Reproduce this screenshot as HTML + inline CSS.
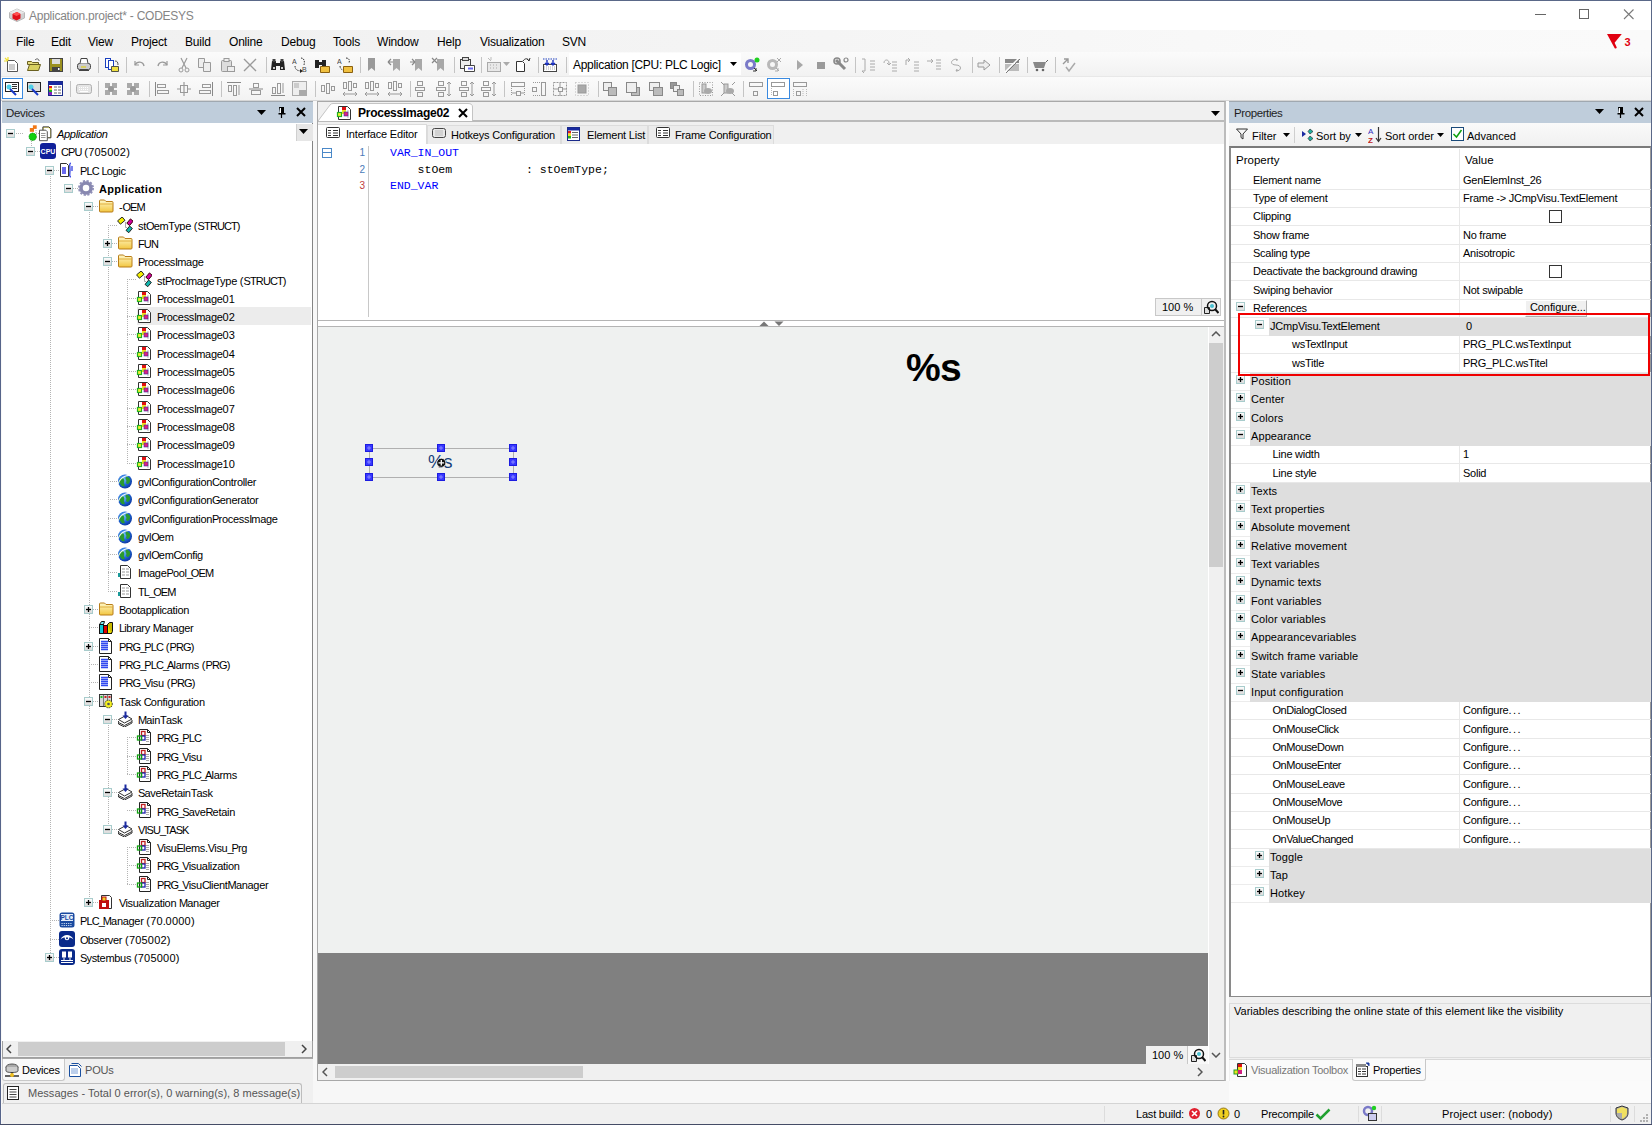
<!DOCTYPE html>
<html><head><meta charset="utf-8"><style>
*{margin:0;padding:0}
html,body{width:1652px;height:1125px;overflow:hidden;background:#f0f0f0}
body{position:relative;font-family:"Liberation Sans",sans-serif}
div,svg{position:absolute}
.t{white-space:nowrap;font-family:"Liberation Sans",sans-serif}
</style></head><body>
<div style="left:0px;top:0px;width:1652px;height:1125px;background:#f0f0f0"></div>
<div style="left:0px;top:0px;width:1652px;height:30px;background:#fff"></div>
<svg style="left:8px;top:7px" width="18" height="16" viewBox="0 0 18 16"><path d="M1.5 5.5 L9 2 L16.5 5.5 L16.5 11 L9 14.5 L1.5 11Z" fill="#d0d0d0" stroke="#b8b8b8"/><path d="M1.5 5.5 L9 2 L16.5 5.5 L9 9Z" fill="#e8e8e8"/><path d="M4.5 7 L9 5 L12.5 7 L12.5 11.5 L8.5 13.5 L4.5 11.5Z" fill="#e0101a"/><path d="M4.5 7 L9 5 L12.5 7 L8.5 9Z" fill="#ff5050"/></svg>
<div class="t" style="left:29px;top:6.5px;line-height:18px;font-size:12px;color:#858585;letter-spacing:-0.25px">Application.project* - CODESYS</div>
<div style="left:1535px;top:14px;width:11px;height:1px;background:#666"></div>
<div style="left:1579px;top:9px;width:10px;height:10px;border:1px solid #666;box-sizing:border-box"></div>
<svg style="left:1623px;top:9px" width="12" height="12" viewBox="0 0 12 12"><path d="M1 0.5 L10.5 10 M10.5 0.5 L1 10" stroke="#7a7a7a" stroke-width="1.1"/></svg>
<div style="left:1px;top:30px;width:1650px;height:22px;background:linear-gradient(90deg,#f0f0f0 0%,#f2f2f2 25%,#f5f5f5 50%,#f9f9f9 80%,#fafafa 100%)"></div>
<div class="t" style="left:16px;top:33.0px;line-height:18px;font-size:12px;color:#000;letter-spacing:-0.2px">File</div>
<div class="t" style="left:51px;top:33.0px;line-height:18px;font-size:12px;color:#000;letter-spacing:-0.2px">Edit</div>
<div class="t" style="left:88px;top:33.0px;line-height:18px;font-size:12px;color:#000;letter-spacing:-0.2px">View</div>
<div class="t" style="left:131px;top:33.0px;line-height:18px;font-size:12px;color:#000;letter-spacing:-0.2px">Project</div>
<div class="t" style="left:185px;top:33.0px;line-height:18px;font-size:12px;color:#000;letter-spacing:-0.2px">Build</div>
<div class="t" style="left:229px;top:33.0px;line-height:18px;font-size:12px;color:#000;letter-spacing:-0.2px">Online</div>
<div class="t" style="left:281px;top:33.0px;line-height:18px;font-size:12px;color:#000;letter-spacing:-0.2px">Debug</div>
<div class="t" style="left:333px;top:33.0px;line-height:18px;font-size:12px;color:#000;letter-spacing:-0.2px">Tools</div>
<div class="t" style="left:377px;top:33.0px;line-height:18px;font-size:12px;color:#000;letter-spacing:-0.2px">Window</div>
<div class="t" style="left:437px;top:33.0px;line-height:18px;font-size:12px;color:#000;letter-spacing:-0.2px">Help</div>
<div class="t" style="left:480px;top:33.0px;line-height:18px;font-size:12px;color:#000;letter-spacing:-0.2px">Visualization</div>
<div class="t" style="left:562px;top:33.0px;line-height:18px;font-size:12px;color:#000;letter-spacing:-0.2px">SVN</div>
<div style="left:1px;top:52px;width:1650px;height:49px;background:linear-gradient(#fbfbfb,#f2f2f2 48%,#fbfbfb 50%,#f2f2f2)"></div>
<div style="left:1px;top:100px;width:1650px;height:1px;background:#d6d6d6"></div>
<svg style="left:4px;top:57px" width="16" height="16" viewBox="0 0 16 16"><path d="M3.5 3.5h7l3 3v8h-10z" fill="#fff" stroke="#555"/><rect x="5" y="7" width="6" height="6" fill="#ccc"/><path d="M1 1l3 3M4 0v3M0 4h3" stroke="#f0e030" stroke-width="1.2"/></svg>
<svg style="left:26px;top:57px" width="16" height="16" viewBox="0 0 16 16"><path d="M1.5 4.5h4l1 1h6v2h-11z" fill="#e6dc80" stroke="#6a6020"/><path d="M1.5 13.5l2-6h11l-2 6z" fill="#d8d060" stroke="#6a6020"/><path d="M9 3c2-2 4-1 4 1" stroke="#555" fill="none"/></svg>
<svg style="left:48px;top:57px" width="16" height="16" viewBox="0 0 16 16"><rect x="1.5" y="1.5" width="13" height="13" fill="#9a9020" stroke="#444"/><rect x="4" y="2" width="8" height="5" fill="#ddd"/><rect x="4" y="10" width="8" height="4" fill="#444"/><rect x="10" y="11" width="1.5" height="2" fill="#fff"/></svg>
<svg style="left:76px;top:57px" width="16" height="16" viewBox="0 0 16 16"><rect x="1.5" y="6.5" width="13" height="6" rx="2" fill="#ccc" stroke="#444"/><path d="M4 6.5l1-5h6l1 5" fill="#fff" stroke="#444"/><path d="M5 10h5" stroke="#e0d020" stroke-width="1.2"/><path d="M3 13.5h10" stroke="#444"/></svg>
<svg style="left:104px;top:57px" width="16" height="16" viewBox="0 0 16 16"><rect x="1.5" y="1.5" width="5" height="9" fill="#fff" stroke="#1a40c0"/><rect x="4.5" y="3.5" width="5" height="9" fill="#fff" stroke="#1a40c0"/><path d="M7.5 9.5h7v5h-7z" fill="#f0e040" stroke="#554"/><path d="M11 4c2 0 3 1 3 4" stroke="#555" fill="none"/></svg>
<svg style="left:132px;top:57px" width="16" height="16" viewBox="0 0 16 16"><path d="M3 4v4h4" stroke="#9a9a9a" fill="none" stroke-width="1.2"/><path d="M3 8c2-4 8-4 9 1" stroke="#9a9a9a" fill="none" stroke-width="1.4"/></svg>
<svg style="left:154px;top:57px" width="16" height="16" viewBox="0 0 16 16"><path d="M13 4v4h-4" stroke="#9a9a9a" fill="none" stroke-width="1.2"/><path d="M13 8c-2-4-8-4-9 1" stroke="#9a9a9a" fill="none" stroke-width="1.4"/></svg>
<svg style="left:176px;top:57px" width="16" height="16" viewBox="0 0 16 16"><path d="M5 1l5 10M11 1l-5 10" stroke="#9a9a9a" stroke-width="1.2"/><circle cx="5" cy="13" r="2" fill="none" stroke="#9a9a9a"/><circle cx="11" cy="13" r="2" fill="none" stroke="#9a9a9a"/></svg>
<svg style="left:197px;top:57px" width="16" height="16" viewBox="0 0 16 16"><path d="M1.5 1.5h6v9h-6z" fill="#eee" stroke="#9a9a9a"/><path d="M6.5 5.5h7v9h-7z" fill="#eee" stroke="#9a9a9a"/></svg>
<svg style="left:220px;top:57px" width="16" height="16" viewBox="0 0 16 16"><rect x="1.5" y="3.5" width="10" height="11" rx="1" fill="#ddd" stroke="#9a9a9a"/><rect x="4" y="1.5" width="5" height="3" fill="#eee" stroke="#9a9a9a"/><rect x="7.5" y="9.5" width="7" height="5" fill="#eee" stroke="#9a9a9a"/></svg>
<svg style="left:242px;top:57px" width="16" height="16" viewBox="0 0 16 16"><path d="M2 2l12 12M14 2l-12 12" stroke="#9a9a9a" stroke-width="1.4"/></svg>
<svg style="left:270px;top:57px" width="16" height="16" viewBox="0 0 16 16"><path d="M2 4h4v9h-5zM10 4h4l1 9h-5z" fill="#222"/><rect x="6" y="6" width="4" height="3" fill="#222"/><rect x="2.5" y="2" width="3" height="3" fill="#444"/><rect x="10.5" y="2" width="3" height="3" fill="#444"/><circle cx="4" cy="11" r="1" fill="#fff"/><circle cx="12" cy="11" r="1" fill="#fff"/></svg>
<svg style="left:292px;top:57px" width="16" height="16" viewBox="0 0 16 16"><text x="0" y="7" font-size="7" fill="#444" font-family="Liberation Sans">A</text><text x="10" y="15" font-size="7" fill="#444" font-family="Liberation Sans">B</text><path d="M3 9c0 4 3 5 7 5M9 1c3 0 4 3 3 7" stroke="#333" fill="none" stroke-dasharray="1.5 1"/><path d="M8 12l3 2-3 2z" fill="#222"/></svg>
<svg style="left:314px;top:57px" width="16" height="16" viewBox="0 0 16 16"><path d="M1 3h4v8h-4zM8 3h4v8h-4z" fill="#222"/><rect x="5" y="5" width="3" height="3" fill="#222"/><path d="M6.5 9.5h9v6h-9z" fill="#f0c040" stroke="#8a6010"/></svg>
<svg style="left:337px;top:57px" width="16" height="16" viewBox="0 0 16 16"><text x="0" y="7" font-size="7" fill="#444" font-family="Liberation Sans">A</text><path d="M3 9c0 3 2 4 4 4M9 1c3 0 4 2 3 5" stroke="#333" fill="none" stroke-dasharray="1.5 1"/><path d="M6.5 9.5h9v6h-9z" fill="#f0c040" stroke="#8a6010"/></svg>
<svg style="left:364px;top:57px" width="16" height="16" viewBox="0 0 16 16"><path d="M4 1h7v13l-3.5-3-3.5 3z" fill="#9a9a9a"/></svg>
<svg style="left:387px;top:57px" width="16" height="16" viewBox="0 0 16 16"><path d="M6 2h7v12l-3.5-3-3.5 3z" fill="#a8a8a8"/><path d="M1 5l3-3M1 5h5M1 5l3 3" stroke="#888" stroke-width="1.2" fill="none"/></svg>
<svg style="left:409px;top:57px" width="16" height="16" viewBox="0 0 16 16"><path d="M6 2h7v12l-3.5-3-3.5 3z" fill="#a8a8a8"/><path d="M6 5l-3-3M6 5h-5M6 5l-3 3" stroke="#888" stroke-width="1.2" fill="none"/></svg>
<svg style="left:431px;top:57px" width="16" height="16" viewBox="0 0 16 16"><path d="M6 2h7v12l-3.5-3-3.5 3z" fill="#a8a8a8"/><path d="M1 1l5 5M6 1l-5 5" stroke="#888" stroke-width="1.2"/></svg>
<svg style="left:459px;top:57px" width="16" height="16" viewBox="0 0 16 16"><rect x="1.5" y="2.5" width="10" height="9" fill="#eee" stroke="#444"/><rect x="3.5" y="0.5" width="6" height="3" fill="#ddd" stroke="#444"/><path d="M5.5 8.5h10v6h-10z" fill="#fff" stroke="#444"/><path d="M9 11.5h5" stroke="#6a6af0" stroke-width="2"/></svg>
<svg style="left:486px;top:57px" width="16" height="16" viewBox="0 0 16 16"><rect x="1.5" y="5.5" width="13" height="9" fill="#e8e8e8" stroke="#aaa"/><path d="M4 8h1M7 8h1M10 8h1M4 11h1M7 11h1M10 11h1" stroke="#aaa"/><path d="M2 1l3 3M5 0v3" stroke="#bbb"/></svg>
<svg style="left:515px;top:57px" width="16" height="16" viewBox="0 0 16 16"><path d="M1.5 4.5h6l2 2v8h-8z" fill="#fff" stroke="#333"/><path d="M8 4c2-3 5-3 6 0M12 2l2 2 1-3" stroke="#333" fill="none"/></svg>
<svg style="left:542px;top:57px" width="16" height="16" viewBox="0 0 16 16"><rect x="1.5" y="7.5" width="13" height="7" fill="#fff" stroke="#444"/><path d="M2 10h12M2 12h12" stroke="#aaa" stroke-dasharray="1 1"/><path d="M1 2h14" stroke="#2040c0" stroke-dasharray="1.5 1"/><path d="M5 3v5M3 6l2 2 2-2M11 3v5M9 6l2 2 2-2" stroke="#1a30c0" stroke-width="1.4" fill="none"/></svg>
<svg style="left:744px;top:57px" width="16" height="16" viewBox="0 0 16 16"><circle cx="6.5" cy="7.5" r="4" fill="none" stroke="#7a7ac8" stroke-width="3"/><circle cx="13" cy="3" r="2.5" fill="#20d020"/><path d="M10 11l3 3M12 11v3h-3" stroke="#333" fill="none"/></svg>
<svg style="left:766px;top:57px" width="16" height="16" viewBox="0 0 16 16"><circle cx="6.5" cy="7.5" r="4" fill="none" stroke="#b8b8b8" stroke-width="3"/><path d="M11 1l4 4M15 1l-4 4M10 11l3 3M12 11v3h-3" stroke="#aaa" fill="none"/></svg>
<svg style="left:792px;top:57px" width="16" height="16" viewBox="0 0 16 16"><path d="M5 3l6 5-6 5z" fill="#a8a8a8"/></svg>
<svg style="left:813px;top:57px" width="16" height="16" viewBox="0 0 16 16"><rect x="4" y="5" width="8" height="7" fill="#9a9a9a"/></svg>
<svg style="left:833px;top:57px" width="16" height="16" viewBox="0 0 16 16"><path d="M3 3l9 9" stroke="#888" stroke-width="3"/><circle cx="4" cy="4" r="3" fill="none" stroke="#888" stroke-width="1.6"/><circle cx="13" cy="3" r="2" fill="none" stroke="#888" stroke-width="1.2"/></svg>
<svg style="left:860px;top:57px" width="16" height="16" viewBox="0 0 16 16"><path d="M2 2h3v12h-3M2 14l2 2M10 4h5M10 7h5M10 10h5M10 13h5" stroke="#aaa" fill="none"/></svg>
<svg style="left:882px;top:57px" width="16" height="16" viewBox="0 0 16 16"><path d="M2 6c0-4 5-4 5 0v2M5 6l2 2 2-2M10 5h5M10 8h5M10 11h5M10 14h5" stroke="#aaa" fill="none"/></svg>
<svg style="left:904px;top:57px" width="16" height="16" viewBox="0 0 16 16"><path d="M2 8v-5h4M4 1l2 2-2 2M10 5h5M10 8h5M10 11h5M10 14h5" stroke="#aaa" fill="none"/></svg>
<svg style="left:926px;top:57px" width="16" height="16" viewBox="0 0 16 16"><path d="M1 4h6M5 2l2 2-2 2M10 3h5M10 6h5M10 9h5M10 12h5" stroke="#aaa" fill="none"/></svg>
<svg style="left:948px;top:57px" width="16" height="16" viewBox="0 0 16 16"><path d="M8 2c-6 1-6 6 0 6s6 6 0 6M10 3l-2-1 1 2M10 13l-2 1 1-2" stroke="#aaa" fill="none"/></svg>
<svg style="left:976px;top:57px" width="16" height="16" viewBox="0 0 16 16"><path d="M2 6h6v-3l6 5-6 5v-3h-6z" fill="#eee" stroke="#999"/></svg>
<svg style="left:1004px;top:57px" width="16" height="16" viewBox="0 0 16 16"><path d="M1 2h14v4h-14z" fill="#888"/><path d="M1 7h14v7h-14z" fill="#bbb"/><path d="M1 15L15 1" stroke="#fff" stroke-width="1.5"/><path d="M2 16L16 2" stroke="#777"/></svg>
<svg style="left:1032px;top:57px" width="16" height="16" viewBox="0 0 16 16"><path d="M1 5h13l-2 6h-9z" fill="#888"/><circle cx="5" cy="13" r="1.3" fill="#666"/><circle cx="11" cy="13" r="1.3" fill="#666"/><path d="M14 5l2-2" stroke="#666"/></svg>
<svg style="left:1061px;top:57px" width="16" height="16" viewBox="0 0 16 16"><path d="M2 7l5-5M3 2h4v4" stroke="#999" stroke-width="1.4" fill="none"/><path d="M5 10l3 4 6-8" stroke="#aaa" stroke-width="1.5" fill="none"/></svg>
<svg style="left:503px;top:62px" width="7" height="4" viewBox="0 0 7 4"><path d="M0 0h7l-3.5 4z" fill="#aaa"/></svg>
<div style="left:70px;top:57px;width:1px;height:16px;background:#c4c4c4"></div>
<div style="left:98px;top:57px;width:1px;height:16px;background:#c4c4c4"></div>
<div style="left:126px;top:57px;width:1px;height:16px;background:#c4c4c4"></div>
<div style="left:266px;top:57px;width:1px;height:16px;background:#c4c4c4"></div>
<div style="left:360px;top:57px;width:1px;height:16px;background:#c4c4c4"></div>
<div style="left:454px;top:57px;width:1px;height:16px;background:#c4c4c4"></div>
<div style="left:481px;top:57px;width:1px;height:16px;background:#c4c4c4"></div>
<div style="left:538px;top:57px;width:1px;height:16px;background:#c4c4c4"></div>
<div style="left:566px;top:57px;width:1px;height:16px;background:#c4c4c4"></div>
<div style="left:855px;top:57px;width:1px;height:16px;background:#c4c4c4"></div>
<div style="left:972px;top:57px;width:1px;height:16px;background:#c4c4c4"></div>
<div style="left:999px;top:57px;width:1px;height:16px;background:#c4c4c4"></div>
<div style="left:1027px;top:57px;width:1px;height:16px;background:#c4c4c4"></div>
<div style="left:1055px;top:57px;width:1px;height:16px;background:#c4c4c4"></div>
<div style="left:569px;top:53px;width:172px;height:22px;background:#fff"></div>
<div class="t" style="left:573px;top:56.0px;line-height:18px;font-size:12px;color:#000;letter-spacing:-0.3px">Application [CPU: PLC Logic]</div>
<svg style="left:730px;top:62px" width="8" height="5" viewBox="0 0 8 5"><path d="M0 0h7l-3.5 4z" fill="#000"/></svg>
<div style="left:1px;top:76px;width:1650px;height:1px;background:#e8e8e8"></div>
<div style="left:2px;top:78px;width:21px;height:21px;background:#fff;border:1px solid #3a8ae0;box-sizing:border-box"></div>
<div style="left:767px;top:78px;width:23px;height:21px;background:#fff;border:1px solid #3a8ae0;box-sizing:border-box"></div>
<svg style="left:4px;top:81px" width="16" height="16" viewBox="0 0 16 16"><rect x="1.5" y="1.5" width="13" height="9" fill="#fff" stroke="#222"/><path d="M8 3.5h5M8 5.5h5M8 7.5h5" stroke="#333"/><circle cx="5" cy="6" r="2.5" fill="#50d0e8"/><path d="M6 8l6 6" stroke="#1a3ac8" stroke-width="2"/></svg>
<svg style="left:26px;top:81px" width="16" height="16" viewBox="0 0 16 16"><rect x="1.5" y="1.5" width="13" height="9" fill="#ddd" stroke="#222"/><circle cx="5" cy="6" r="2.5" fill="#50d0e8"/><path d="M6 8l6 6" stroke="#1a3ac8" stroke-width="2"/></svg>
<svg style="left:48px;top:81px" width="16" height="16" viewBox="0 0 16 16"><rect x="0.5" y="0.5" width="14" height="14" fill="#fff" stroke="#1a2a8a"/><rect x="1" y="1" width="13" height="3" fill="#1a2aa0"/><rect x="1" y="5" width="3" height="2" fill="#e02020"/><rect x="1" y="7" width="3" height="2" fill="#f0e020"/><rect x="1" y="9" width="3" height="2" fill="#20b020"/><rect x="1" y="11" width="3" height="3" fill="#8020c0"/><path d="M6 6h3M10 6h3M6 9h3M10 9h3M6 12h3M10 12h3" stroke="#666"/></svg>
<svg style="left:76px;top:81px" width="16" height="16" viewBox="0 0 16 16"><rect x="0.5" y="3.5" width="15" height="9" rx="2" fill="#e4e4e4" stroke="#b0b0b0"/><path d="M3 6.5h10M3 8.5h10" stroke="#fff" stroke-dasharray="1 1"/><path d="M4 10.5h8" stroke="#fff"/></svg>
<svg style="left:103px;top:81px" width="16" height="16" viewBox="0 0 16 16"><path d="M2 2h5v5h-5zM9 2h5v5h-5zM2 9h5v5h-5zM9 9h5v5h-5z" fill="#aaa"/><circle cx="8" cy="8" r="3" fill="#999"/></svg>
<svg style="left:125px;top:81px" width="16" height="16" viewBox="0 0 16 16"><path d="M2 2h5v5h-5zM9 2h5v5h-5zM2 9h5v5h-5zM9 9h5v5h-5z" fill="#aaa"/><circle cx="8" cy="8" r="3" fill="#999"/></svg>
<svg style="left:154px;top:81px" width="16" height="16" viewBox="0 0 16 16"><path d="M1.5 1v14" stroke="#888"/><rect x="3.5" y="3.5" width="8" height="3" fill="none" stroke="#999"/><rect x="3.5" y="9.5" width="11" height="3" fill="none" stroke="#999"/></svg>
<svg style="left:176px;top:81px" width="16" height="16" viewBox="0 0 16 16"><path d="M8 1v14" stroke="#888"/><rect x="4.5" y="4.5" width="7" height="7" fill="none" stroke="#999"/><path d="M1 8h3M12 8h3" stroke="#999"/></svg>
<svg style="left:198px;top:81px" width="16" height="16" viewBox="0 0 16 16"><path d="M14.5 1v14" stroke="#888"/><rect x="4.5" y="3.5" width="8" height="3" fill="none" stroke="#999"/><rect x="1.5" y="9.5" width="11" height="3" fill="none" stroke="#999"/></svg>
<svg style="left:226px;top:81px" width="16" height="16" viewBox="0 0 16 16"><path d="M1 1.5h14" stroke="#888"/><rect x="2.5" y="4.5" width="3" height="6" fill="none" stroke="#999"/><rect x="7.5" y="4.5" width="3" height="10" fill="none" stroke="#999"/><path d="M13 14v-10" stroke="#999"/></svg>
<svg style="left:248px;top:81px" width="16" height="16" viewBox="0 0 16 16"><path d="M1 8h14" stroke="#888"/><rect x="5.5" y="2.5" width="5" height="4" fill="none" stroke="#999"/><rect x="3.5" y="9.5" width="9" height="4" fill="none" stroke="#999"/></svg>
<svg style="left:270px;top:81px" width="16" height="16" viewBox="0 0 16 16"><path d="M1 14.5h14" stroke="#888"/><rect x="2.5" y="6.5" width="3" height="6" fill="none" stroke="#999"/><rect x="7.5" y="2.5" width="3" height="10" fill="none" stroke="#999"/><path d="M13 2v10" stroke="#999"/></svg>
<svg style="left:292px;top:81px" width="16" height="16" viewBox="0 0 16 16"><rect x="0.5" y="0.5" width="14" height="14" fill="#eee" stroke="#aaa"/><rect x="2" y="2" width="5" height="5" fill="#ccc"/><rect x="7" y="9" width="7" height="5" fill="#aaa"/></svg>
<svg style="left:320px;top:81px" width="16" height="16" viewBox="0 0 16 16"><rect x="1.5" y="4.5" width="3" height="6" fill="none" stroke="#999"/><rect x="6.5" y="2.5" width="3" height="10" fill="none" stroke="#999"/><rect x="11.5" y="5.5" width="3" height="4" fill="none" stroke="#999"/></svg>
<svg style="left:342px;top:81px" width="16" height="16" viewBox="0 0 16 16"><rect x="1.5" y="1.5" width="3" height="6" fill="none" stroke="#999"/><rect x="6.5" y="0.5" width="3" height="9" fill="none" stroke="#999"/><rect x="11.5" y="2.5" width="3" height="4" fill="none" stroke="#999"/><path d="M1 13h14M3 11l-2 2 2 2M13 11l2 2-2 2" stroke="#999" fill="none"/></svg>
<svg style="left:364px;top:81px" width="16" height="16" viewBox="0 0 16 16"><rect x="1.5" y="1.5" width="3" height="6" fill="none" stroke="#999"/><rect x="6.5" y="0.5" width="3" height="9" fill="none" stroke="#999"/><rect x="11.5" y="2.5" width="3" height="4" fill="none" stroke="#999"/><path d="M1 13h14M3 11l-2 2 2 2M13 11l2 2-2 2" stroke="#999" fill="none"/></svg>
<svg style="left:387px;top:81px" width="16" height="16" viewBox="0 0 16 16"><rect x="1.5" y="1.5" width="3" height="6" fill="none" stroke="#999"/><rect x="6.5" y="0.5" width="3" height="9" fill="none" stroke="#999"/><rect x="11.5" y="2.5" width="3" height="4" fill="none" stroke="#999"/><path d="M1 13h14M3 11l-2 2 2 2M13 11l2 2-2 2" stroke="#999" fill="none"/></svg>
<svg style="left:414px;top:81px" width="16" height="16" viewBox="0 0 16 16"><rect x="3.5" y="0.5" width="5" height="4" fill="none" stroke="#999"/><rect x="1.5" y="6.5" width="9" height="3" fill="none" stroke="#999"/><rect x="3.5" y="11.5" width="5" height="4" fill="none" stroke="#999"/></svg>
<svg style="left:436px;top:81px" width="16" height="16" viewBox="0 0 16 16"><rect x="2.5" y="0.5" width="5" height="4" fill="none" stroke="#999"/><rect x="0.5" y="6.5" width="9" height="3" fill="none" stroke="#999"/><rect x="2.5" y="11.5" width="5" height="4" fill="none" stroke="#999"/><path d="M13 1v14M11 3l2-2 2 2M11 13l2 2 2-2" stroke="#999" fill="none"/></svg>
<svg style="left:459px;top:81px" width="16" height="16" viewBox="0 0 16 16"><rect x="2.5" y="0.5" width="5" height="4" fill="none" stroke="#999"/><rect x="0.5" y="6.5" width="9" height="3" fill="none" stroke="#999"/><rect x="2.5" y="11.5" width="5" height="4" fill="none" stroke="#999"/><path d="M13 1v14M11 3l2-2 2 2M11 13l2 2 2-2" stroke="#999" fill="none"/></svg>
<svg style="left:481px;top:81px" width="16" height="16" viewBox="0 0 16 16"><rect x="2.5" y="0.5" width="5" height="4" fill="none" stroke="#999"/><rect x="0.5" y="6.5" width="9" height="3" fill="none" stroke="#999"/><rect x="2.5" y="11.5" width="5" height="4" fill="none" stroke="#999"/><path d="M13 1v14M11 3l2-2 2 2M11 13l2 2 2-2" stroke="#999" fill="none"/></svg>
<svg style="left:510px;top:81px" width="16" height="16" viewBox="0 0 16 16"><rect x="1.5" y="1.5" width="13" height="4" fill="none" stroke="#999"/><path d="M1.5 7v7M14.5 7v7" stroke="#999" stroke-dasharray="1 1"/><rect x="6.5" y="10.5" width="4" height="4" fill="none" stroke="#999"/><path d="M2 12h4M11 12h3" stroke="#999"/></svg>
<svg style="left:531px;top:81px" width="16" height="16" viewBox="0 0 16 16"><rect x="10.5" y="1.5" width="4" height="13" fill="none" stroke="#999"/><path d="M2 1.5h7M2 14.5h7" stroke="#999" stroke-dasharray="1 1"/><rect x="1.5" y="6.5" width="4" height="4" fill="none" stroke="#999"/></svg>
<svg style="left:552px;top:81px" width="16" height="16" viewBox="0 0 16 16"><path d="M1.5 1.5h13v13h-13z" fill="none" stroke="#999" stroke-dasharray="2 1"/><rect x="6.5" y="6.5" width="4" height="4" fill="none" stroke="#999"/><path d="M8 2v4M8 11v4M2 8h4M11 8h4" stroke="#999"/></svg>
<svg style="left:574px;top:81px" width="16" height="16" viewBox="0 0 16 16"><path d="M1.5 1.5h13v13h-13z" fill="none" stroke="#bbb" stroke-dasharray="1 2"/><rect x="4" y="4" width="8" height="8" fill="#aaa" stroke="#999"/></svg>
<svg style="left:602px;top:81px" width="16" height="16" viewBox="0 0 16 16"><rect x="1.5" y="1.5" width="8" height="8" fill="#eee" stroke="#888"/><rect x="6.5" y="6.5" width="8" height="8" fill="#bbb" stroke="#888"/></svg>
<svg style="left:625px;top:81px" width="16" height="16" viewBox="0 0 16 16"><rect x="6.5" y="6.5" width="8" height="8" fill="#bbb" stroke="#888"/><rect x="1.5" y="1.5" width="10" height="10" fill="#eee" stroke="#888"/></svg>
<svg style="left:648px;top:81px" width="16" height="16" viewBox="0 0 16 16"><rect x="1.5" y="1.5" width="10" height="8" fill="#eee" stroke="#888"/><rect x="5.5" y="6.5" width="9" height="8" fill="#bbb" stroke="#888"/></svg>
<svg style="left:669px;top:81px" width="16" height="16" viewBox="0 0 16 16"><rect x="1.5" y="1.5" width="6" height="6" fill="#999" stroke="#888"/><rect x="4.5" y="4.5" width="6" height="6" fill="#eee" stroke="#888"/><rect x="8.5" y="8.5" width="6" height="6" fill="#bbb" stroke="#888"/></svg>
<svg style="left:698px;top:81px" width="16" height="16" viewBox="0 0 16 16"><path d="M1.5 1.5h13v13h-13z" fill="none" stroke="#999" stroke-dasharray="1 1.5"/><rect x="4" y="3" width="4" height="9" fill="#ccc" stroke="#999"/><ellipse cx="10" cy="10" rx="4" ry="3" fill="#aaa"/></svg>
<svg style="left:720px;top:81px" width="16" height="16" viewBox="0 0 16 16"><path d="M1 1l3 3M15 1l-3 3M1 15l3-3M15 15l-3-3" stroke="#999"/><rect x="4" y="3" width="4" height="9" fill="#ccc" stroke="#999"/><ellipse cx="10" cy="10" rx="4" ry="3" fill="#aaa"/></svg>
<svg style="left:748px;top:81px" width="16" height="16" viewBox="0 0 16 16"><rect x="1.5" y="1.5" width="13" height="4" fill="none" stroke="#999"/><rect x="5.5" y="10.5" width="4" height="4" fill="none" stroke="#999"/></svg>
<svg style="left:770px;top:81px" width="16" height="16" viewBox="0 0 16 16"><rect x="1.5" y="1.5" width="13" height="4" fill="none" stroke="#999"/><rect x="3.5" y="10.5" width="4" height="4" fill="none" stroke="#999"/><path d="M1.5 7v8" stroke="#bbb" stroke-dasharray="1 1"/></svg>
<svg style="left:792px;top:81px" width="16" height="16" viewBox="0 0 16 16"><rect x="1.5" y="1.5" width="13" height="4" fill="none" stroke="#999"/><rect x="4.5" y="10.5" width="4" height="4" fill="none" stroke="#999"/><path d="M1.5 8v7M14.5 8v7M11 8v7" stroke="#bbb" stroke-dasharray="1 1"/></svg>
<div style="left:70px;top:81px;width:1px;height:16px;background:#c4c4c4"></div>
<div style="left:98px;top:81px;width:1px;height:16px;background:#c4c4c4"></div>
<div style="left:149px;top:81px;width:1px;height:16px;background:#c4c4c4"></div>
<div style="left:221px;top:81px;width:1px;height:16px;background:#c4c4c4"></div>
<div style="left:315px;top:81px;width:1px;height:16px;background:#c4c4c4"></div>
<div style="left:410px;top:81px;width:1px;height:16px;background:#c4c4c4"></div>
<div style="left:504px;top:81px;width:1px;height:16px;background:#c4c4c4"></div>
<div style="left:598px;top:81px;width:1px;height:16px;background:#c4c4c4"></div>
<div style="left:693px;top:81px;width:1px;height:16px;background:#c4c4c4"></div>
<div style="left:743px;top:81px;width:1px;height:16px;background:#c4c4c4"></div>
<svg style="left:1606px;top:33px" width="17" height="17" viewBox="0 0 17 17"><path d="M1 1H15.8L8.6 9.8L10.8 14.6Q10.2 16 8.7 15.3Z" fill="#e00010"/></svg>
<div class="t" style="left:1624.5px;top:33.5px;line-height:16px;font-size:11px;color:#e00010;font-weight:bold">3</div>
<div style="left:2px;top:101px;width:311px;height:23px;background:#bfcddb;border-top:1px solid #a0a8b0;border-bottom:1px solid #8e969e;box-sizing:border-box"></div>
<div class="t" style="left:6px;top:104.0px;line-height:18px;font-size:11.5px;color:#1e1e1e;letter-spacing:-0.3px">Devices</div>
<svg style="left:257px;top:110px" width="10" height="6" viewBox="0 0 10 6"><path d="M0 0h9l-4.5 5z" fill="#000"/></svg>
<svg style="left:277px;top:106px" width="9" height="12" viewBox="0 0 9 12"><path d="M2 1h5v6h1.5v1.5h-7v-1.5h1.5z" fill="#000"/><path d="M4.5 8v4" stroke="#000" stroke-width="1.2"/><path d="M3.5 2v5" stroke="#fff" stroke-width="1"/></svg>
<svg style="left:296px;top:107px" width="10" height="10" viewBox="0 0 10 10"><path d="M1 1l8 8M9 1l-8 8" stroke="#000" stroke-width="2"/></svg>
<div style="left:2px;top:123px;width:311px;height:935px;background:#fff;border-right:1px solid #848484;box-sizing:border-box"></div>
<div style="left:313px;top:101px;width:4px;height:980px;background:#f8f8f8"></div>
<div style="left:1226px;top:101px;width:3px;height:980px;background:#fcfcfc"></div>
<div style="left:31px;top:151px;width:9px;height:1px;background:repeating-linear-gradient(90deg,#b4b4b4 0 1px,transparent 1px 2px)"></div>
<div style="left:50px;top:170px;width:1px;height:787px;background:repeating-linear-gradient(#b4b4b4 0 1px,transparent 1px 2px)"></div>
<div style="left:50px;top:170px;width:9px;height:1px;background:repeating-linear-gradient(90deg,#b4b4b4 0 1px,transparent 1px 2px)"></div>
<div style="left:69px;top:188px;width:9px;height:1px;background:repeating-linear-gradient(90deg,#b4b4b4 0 1px,transparent 1px 2px)"></div>
<div style="left:89px;top:206px;width:1px;height:696px;background:repeating-linear-gradient(#b4b4b4 0 1px,transparent 1px 2px)"></div>
<div style="left:89px;top:206px;width:9px;height:1px;background:repeating-linear-gradient(90deg,#b4b4b4 0 1px,transparent 1px 2px)"></div>
<div style="left:108px;top:225px;width:1px;height:366px;background:repeating-linear-gradient(#b4b4b4 0 1px,transparent 1px 2px)"></div>
<div style="left:108px;top:225px;width:9px;height:1px;background:repeating-linear-gradient(90deg,#b4b4b4 0 1px,transparent 1px 2px)"></div>
<div style="left:108px;top:243px;width:9px;height:1px;background:repeating-linear-gradient(90deg,#b4b4b4 0 1px,transparent 1px 2px)"></div>
<div style="left:108px;top:261px;width:9px;height:1px;background:repeating-linear-gradient(90deg,#b4b4b4 0 1px,transparent 1px 2px)"></div>
<div style="left:127px;top:279px;width:1px;height:183px;background:repeating-linear-gradient(#b4b4b4 0 1px,transparent 1px 2px)"></div>
<div style="left:127px;top:279px;width:9px;height:1px;background:repeating-linear-gradient(90deg,#b4b4b4 0 1px,transparent 1px 2px)"></div>
<div style="left:127px;top:298px;width:9px;height:1px;background:repeating-linear-gradient(90deg,#b4b4b4 0 1px,transparent 1px 2px)"></div>
<div style="left:127px;top:316px;width:9px;height:1px;background:repeating-linear-gradient(90deg,#b4b4b4 0 1px,transparent 1px 2px)"></div>
<div style="left:127px;top:334px;width:9px;height:1px;background:repeating-linear-gradient(90deg,#b4b4b4 0 1px,transparent 1px 2px)"></div>
<div style="left:127px;top:353px;width:9px;height:1px;background:repeating-linear-gradient(90deg,#b4b4b4 0 1px,transparent 1px 2px)"></div>
<div style="left:127px;top:371px;width:9px;height:1px;background:repeating-linear-gradient(90deg,#b4b4b4 0 1px,transparent 1px 2px)"></div>
<div style="left:127px;top:389px;width:9px;height:1px;background:repeating-linear-gradient(90deg,#b4b4b4 0 1px,transparent 1px 2px)"></div>
<div style="left:127px;top:408px;width:9px;height:1px;background:repeating-linear-gradient(90deg,#b4b4b4 0 1px,transparent 1px 2px)"></div>
<div style="left:127px;top:426px;width:9px;height:1px;background:repeating-linear-gradient(90deg,#b4b4b4 0 1px,transparent 1px 2px)"></div>
<div style="left:127px;top:444px;width:9px;height:1px;background:repeating-linear-gradient(90deg,#b4b4b4 0 1px,transparent 1px 2px)"></div>
<div style="left:127px;top:463px;width:9px;height:1px;background:repeating-linear-gradient(90deg,#b4b4b4 0 1px,transparent 1px 2px)"></div>
<div style="left:108px;top:481px;width:9px;height:1px;background:repeating-linear-gradient(90deg,#b4b4b4 0 1px,transparent 1px 2px)"></div>
<div style="left:108px;top:499px;width:9px;height:1px;background:repeating-linear-gradient(90deg,#b4b4b4 0 1px,transparent 1px 2px)"></div>
<div style="left:108px;top:518px;width:9px;height:1px;background:repeating-linear-gradient(90deg,#b4b4b4 0 1px,transparent 1px 2px)"></div>
<div style="left:108px;top:536px;width:9px;height:1px;background:repeating-linear-gradient(90deg,#b4b4b4 0 1px,transparent 1px 2px)"></div>
<div style="left:108px;top:554px;width:9px;height:1px;background:repeating-linear-gradient(90deg,#b4b4b4 0 1px,transparent 1px 2px)"></div>
<div style="left:108px;top:572px;width:9px;height:1px;background:repeating-linear-gradient(90deg,#b4b4b4 0 1px,transparent 1px 2px)"></div>
<div style="left:108px;top:591px;width:9px;height:1px;background:repeating-linear-gradient(90deg,#b4b4b4 0 1px,transparent 1px 2px)"></div>
<div style="left:89px;top:609px;width:9px;height:1px;background:repeating-linear-gradient(90deg,#b4b4b4 0 1px,transparent 1px 2px)"></div>
<div style="left:89px;top:627px;width:9px;height:1px;background:repeating-linear-gradient(90deg,#b4b4b4 0 1px,transparent 1px 2px)"></div>
<div style="left:89px;top:646px;width:9px;height:1px;background:repeating-linear-gradient(90deg,#b4b4b4 0 1px,transparent 1px 2px)"></div>
<div style="left:89px;top:664px;width:9px;height:1px;background:repeating-linear-gradient(90deg,#b4b4b4 0 1px,transparent 1px 2px)"></div>
<div style="left:89px;top:682px;width:9px;height:1px;background:repeating-linear-gradient(90deg,#b4b4b4 0 1px,transparent 1px 2px)"></div>
<div style="left:89px;top:701px;width:9px;height:1px;background:repeating-linear-gradient(90deg,#b4b4b4 0 1px,transparent 1px 2px)"></div>
<div style="left:108px;top:719px;width:1px;height:110px;background:repeating-linear-gradient(#b4b4b4 0 1px,transparent 1px 2px)"></div>
<div style="left:108px;top:719px;width:9px;height:1px;background:repeating-linear-gradient(90deg,#b4b4b4 0 1px,transparent 1px 2px)"></div>
<div style="left:127px;top:737px;width:1px;height:37px;background:repeating-linear-gradient(#b4b4b4 0 1px,transparent 1px 2px)"></div>
<div style="left:127px;top:737px;width:9px;height:1px;background:repeating-linear-gradient(90deg,#b4b4b4 0 1px,transparent 1px 2px)"></div>
<div style="left:127px;top:756px;width:9px;height:1px;background:repeating-linear-gradient(90deg,#b4b4b4 0 1px,transparent 1px 2px)"></div>
<div style="left:127px;top:774px;width:9px;height:1px;background:repeating-linear-gradient(90deg,#b4b4b4 0 1px,transparent 1px 2px)"></div>
<div style="left:108px;top:792px;width:9px;height:1px;background:repeating-linear-gradient(90deg,#b4b4b4 0 1px,transparent 1px 2px)"></div>
<div style="left:127px;top:810px;width:9px;height:1px;background:repeating-linear-gradient(90deg,#b4b4b4 0 1px,transparent 1px 2px)"></div>
<div style="left:108px;top:829px;width:9px;height:1px;background:repeating-linear-gradient(90deg,#b4b4b4 0 1px,transparent 1px 2px)"></div>
<div style="left:127px;top:847px;width:1px;height:37px;background:repeating-linear-gradient(#b4b4b4 0 1px,transparent 1px 2px)"></div>
<div style="left:127px;top:847px;width:9px;height:1px;background:repeating-linear-gradient(90deg,#b4b4b4 0 1px,transparent 1px 2px)"></div>
<div style="left:127px;top:865px;width:9px;height:1px;background:repeating-linear-gradient(90deg,#b4b4b4 0 1px,transparent 1px 2px)"></div>
<div style="left:127px;top:884px;width:9px;height:1px;background:repeating-linear-gradient(90deg,#b4b4b4 0 1px,transparent 1px 2px)"></div>
<div style="left:89px;top:902px;width:9px;height:1px;background:repeating-linear-gradient(90deg,#b4b4b4 0 1px,transparent 1px 2px)"></div>
<div style="left:50px;top:920px;width:9px;height:1px;background:repeating-linear-gradient(90deg,#b4b4b4 0 1px,transparent 1px 2px)"></div>
<div style="left:50px;top:939px;width:9px;height:1px;background:repeating-linear-gradient(90deg,#b4b4b4 0 1px,transparent 1px 2px)"></div>
<div style="left:50px;top:957px;width:9px;height:1px;background:repeating-linear-gradient(90deg,#b4b4b4 0 1px,transparent 1px 2px)"></div>
<div style="left:16px;top:133px;width:7px;height:1px;background:repeating-linear-gradient(90deg,#b4b4b4 0 1px,transparent 1px 2px)"></div>
<div style="left:31px;top:141px;width:1px;height:6px;background:repeating-linear-gradient(#b4b4b4 0 1px,transparent 1px 2px)"></div>
<div style="left:137px;top:307px;width:174px;height:18px;background:#ececec"></div>
<svg style="left:6px;top:129px" width="9" height="9" viewBox="0 0 9 9"><defs><linearGradient id="eg" x1="0" y1="0" x2="0" y2="1"><stop offset="0" stop-color="#fff"/><stop offset="1" stop-color="#d8d8d8"/></linearGradient></defs><rect x="0.5" y="0.5" width="8" height="8" fill="url(#eg)" stroke="#a8cccc"/><path d="M2 4.5h5" stroke="#000" stroke-width="1.3"/></svg>
<svg style="left:28px;top:124px" width="24" height="18" viewBox="0 0 24 18"><rect x="1.8" y="4" width="4.2" height="3.8" fill="#f07818"/><rect x="4.9" y="1.3" width="3.8" height="3.6" fill="#f07818"/><path d="M8 6v6M8 9.5h3.5" stroke="#aaa" stroke-dasharray="1 1"/><circle cx="4.7" cy="12.8" r="3.7" fill="#10d010" stroke="#0a8a0a" stroke-width=".8" stroke-dasharray="1.2 .6"/><path d="M14.9 2.9h6l2 2v8.9h-8z" fill="#f8f080" stroke="#333"/><path d="M16 4h4.5l1.5 1.5v7.5h-6z" fill="#fff"/><path d="M11.5 6.2h6.3l1.5 1.5v9h-7.8z" fill="#fff" stroke="#555"/><path d="M13 9.5h4.5M13 11.5h4.5M13 13.5h4.5" stroke="#999"/></svg>
<div class="t" style="left:57px;top:126.0px;line-height:16px;font-size:11px;color:#000;letter-spacing:-0.3px;font-style:italic">Application</div>
<svg style="left:26px;top:147px" width="9" height="9" viewBox="0 0 9 9"><defs><linearGradient id="eg" x1="0" y1="0" x2="0" y2="1"><stop offset="0" stop-color="#fff"/><stop offset="1" stop-color="#d8d8d8"/></linearGradient></defs><rect x="0.5" y="0.5" width="8" height="8" fill="url(#eg)" stroke="#a8cccc"/><path d="M2 4.5h5" stroke="#000" stroke-width="1.3"/></svg>
<svg style="left:40px;top:143px" width="16" height="16" viewBox="0 0 16 16"><rect x="0" y="0" width="16" height="16" rx="3" fill="#10209a"/><text x="8" y="11" font-size="7" font-weight="bold" text-anchor="middle" fill="#fff" font-family="Liberation Sans">CPU</text></svg>
<div class="t" style="left:61px;top:144.3px;line-height:16px;font-size:11px;color:#000;letter-spacing:-0.3px"><span style="letter-spacing:-0.9px">C</span><span style="letter-spacing:-0.9px">P</span><span style="letter-spacing:-0.9px">U</span> <span style="letter-spacing:0.2px">(</span><span style="letter-spacing:0.2px">7</span><span style="letter-spacing:0.2px">0</span><span style="letter-spacing:0.2px">5</span><span style="letter-spacing:0.2px">0</span><span style="letter-spacing:0.2px">0</span><span style="letter-spacing:0.2px">2</span><span style="letter-spacing:0.2px">)</span></div>
<svg style="left:45px;top:166px" width="9" height="9" viewBox="0 0 9 9"><defs><linearGradient id="eg" x1="0" y1="0" x2="0" y2="1"><stop offset="0" stop-color="#fff"/><stop offset="1" stop-color="#d8d8d8"/></linearGradient></defs><rect x="0.5" y="0.5" width="8" height="8" fill="url(#eg)" stroke="#a8cccc"/><path d="M2 4.5h5" stroke="#000" stroke-width="1.3"/></svg>
<svg style="left:59px;top:162px" width="16" height="16" viewBox="0 0 16 16"><path d="M1.5 1.5h6l2 2v11h-8z" fill="#fff" stroke="#333"/><rect x="3" y="5" width="4" height="7" fill="#6a6af0"/><path d="M12 1c-2 0-1 3-1 7s-1 7 1 7M13 4v5" stroke="#2030e0" fill="none" stroke-width="1.2"/></svg>
<div class="t" style="left:80px;top:162.6px;line-height:16px;font-size:11px;color:#000;letter-spacing:-0.3px"><span style="letter-spacing:-0.9px">P</span><span style="letter-spacing:-0.9px">L</span><span style="letter-spacing:-0.9px">C</span> <span style="letter-spacing:-0.9px">L</span>ogic</div>
<svg style="left:64px;top:184px" width="9" height="9" viewBox="0 0 9 9"><defs><linearGradient id="eg" x1="0" y1="0" x2="0" y2="1"><stop offset="0" stop-color="#fff"/><stop offset="1" stop-color="#d8d8d8"/></linearGradient></defs><rect x="0.5" y="0.5" width="8" height="8" fill="url(#eg)" stroke="#a8cccc"/><path d="M2 4.5h5" stroke="#000" stroke-width="1.3"/></svg>
<svg style="left:78px;top:180px" width="16" height="16" viewBox="0 0 16 16"><circle cx="8" cy="8" r="5" fill="none" stroke="#8888b0" stroke-width="3.5"/><circle cx="8" cy="8" r="7" fill="none" stroke="#9090b8" stroke-width="2" stroke-dasharray="2.2 1.5"/></svg>
<div class="t" style="left:99px;top:180.9px;line-height:16px;font-size:11px;color:#000;letter-spacing:-0.3px;font-weight:bold;letter-spacing:0.3px">Application</div>
<svg style="left:84px;top:202px" width="9" height="9" viewBox="0 0 9 9"><defs><linearGradient id="eg" x1="0" y1="0" x2="0" y2="1"><stop offset="0" stop-color="#fff"/><stop offset="1" stop-color="#d8d8d8"/></linearGradient></defs><rect x="0.5" y="0.5" width="8" height="8" fill="url(#eg)" stroke="#a8cccc"/><path d="M2 4.5h5" stroke="#000" stroke-width="1.3"/></svg>
<svg style="left:98px;top:198px" width="16" height="16" viewBox="0 0 16 16"><defs><linearGradient id="fg" x1="0" y1="0" x2="0" y2="1"><stop offset="0" stop-color="#fff8c8"/><stop offset="1" stop-color="#f2c640"/></linearGradient></defs><path d="M1.5 3q0-1 1-1h4l1.5 1.5h6q1 0 1 1v8.5q0 1-1 1h-11.5q-1 0-1-1z" fill="url(#fg)" stroke="#b87c18"/><path d="M2 6h13" stroke="#e0b040"/></svg>
<div class="t" style="left:119px;top:199.2px;line-height:16px;font-size:11px;color:#000;letter-spacing:-0.3px">-<span style="letter-spacing:-0.9px">O</span><span style="letter-spacing:-0.9px">E</span><span style="letter-spacing:-0.9px">M</span></div>
<svg style="left:117px;top:217px" width="16" height="16" viewBox="0 0 16 16"><path d="M8.5 5v5.5h1.5" stroke="#aaa" fill="none"/><rect x="-2.2" y="-3" width="4.4" height="6" transform="translate(4.3,3.6) rotate(50)" fill="#f4f000" stroke="#222" stroke-width=".9"/><rect x="-1.8" y="-2.8" width="3.6" height="5.6" transform="translate(13,5.2) rotate(40)" fill="#d000a0" stroke="#300" stroke-width=".9"/><rect x="-1.8" y="-2.8" width="3.6" height="5.6" transform="translate(12.2,12.4) rotate(40)" fill="#10b8b0" stroke="#222" stroke-width=".9"/></svg>
<div class="t" style="left:138px;top:217.6px;line-height:16px;font-size:11px;color:#000;letter-spacing:-0.3px">st<span style="letter-spacing:-0.9px">O</span>em<span style="letter-spacing:-0.9px">T</span>ype <span style="letter-spacing:0.2px">(</span><span style="letter-spacing:-0.9px">S</span><span style="letter-spacing:-0.9px">T</span><span style="letter-spacing:-0.9px">R</span><span style="letter-spacing:-0.9px">U</span><span style="letter-spacing:-0.9px">C</span><span style="letter-spacing:-0.9px">T</span><span style="letter-spacing:0.2px">)</span></div>
<svg style="left:103px;top:239px" width="9" height="9" viewBox="0 0 9 9"><defs><linearGradient id="eg" x1="0" y1="0" x2="0" y2="1"><stop offset="0" stop-color="#fff"/><stop offset="1" stop-color="#d8d8d8"/></linearGradient></defs><rect x="0.5" y="0.5" width="8" height="8" fill="url(#eg)" stroke="#a8cccc"/><path d="M2 4.5h5" stroke="#000" stroke-width="1.3"/><path d="M4.5 2v5" stroke="#000" stroke-width="1.3"/></svg>
<svg style="left:117px;top:235px" width="16" height="16" viewBox="0 0 16 16"><defs><linearGradient id="fg" x1="0" y1="0" x2="0" y2="1"><stop offset="0" stop-color="#fff8c8"/><stop offset="1" stop-color="#f2c640"/></linearGradient></defs><path d="M1.5 3q0-1 1-1h4l1.5 1.5h6q1 0 1 1v8.5q0 1-1 1h-11.5q-1 0-1-1z" fill="url(#fg)" stroke="#b87c18"/><path d="M2 6h13" stroke="#e0b040"/></svg>
<div class="t" style="left:138px;top:235.9px;line-height:16px;font-size:11px;color:#000;letter-spacing:-0.3px"><span style="letter-spacing:-0.9px">F</span><span style="letter-spacing:-0.9px">U</span><span style="letter-spacing:-0.9px">N</span></div>
<svg style="left:103px;top:257px" width="9" height="9" viewBox="0 0 9 9"><defs><linearGradient id="eg" x1="0" y1="0" x2="0" y2="1"><stop offset="0" stop-color="#fff"/><stop offset="1" stop-color="#d8d8d8"/></linearGradient></defs><rect x="0.5" y="0.5" width="8" height="8" fill="url(#eg)" stroke="#a8cccc"/><path d="M2 4.5h5" stroke="#000" stroke-width="1.3"/></svg>
<svg style="left:117px;top:253px" width="16" height="16" viewBox="0 0 16 16"><defs><linearGradient id="fg" x1="0" y1="0" x2="0" y2="1"><stop offset="0" stop-color="#fff8c8"/><stop offset="1" stop-color="#f2c640"/></linearGradient></defs><path d="M1.5 3q0-1 1-1h4l1.5 1.5h6q1 0 1 1v8.5q0 1-1 1h-11.5q-1 0-1-1z" fill="url(#fg)" stroke="#b87c18"/><path d="M2 6h13" stroke="#e0b040"/></svg>
<div class="t" style="left:138px;top:254.2px;line-height:16px;font-size:11px;color:#000;letter-spacing:-0.3px"><span style="letter-spacing:-0.9px">P</span>rocess<span style="letter-spacing:-0.9px">I</span>mage</div>
<svg style="left:136px;top:271px" width="16" height="16" viewBox="0 0 16 16"><path d="M8.5 5v5.5h1.5" stroke="#aaa" fill="none"/><rect x="-2.2" y="-3" width="4.4" height="6" transform="translate(4.3,3.6) rotate(50)" fill="#f4f000" stroke="#222" stroke-width=".9"/><rect x="-1.8" y="-2.8" width="3.6" height="5.6" transform="translate(13,5.2) rotate(40)" fill="#d000a0" stroke="#300" stroke-width=".9"/><rect x="-1.8" y="-2.8" width="3.6" height="5.6" transform="translate(12.2,12.4) rotate(40)" fill="#10b8b0" stroke="#222" stroke-width=".9"/></svg>
<div class="t" style="left:157px;top:272.5px;line-height:16px;font-size:11px;color:#000;letter-spacing:-0.3px">st<span style="letter-spacing:-0.9px">P</span>roc<span style="letter-spacing:-0.9px">I</span>mage<span style="letter-spacing:-0.9px">T</span>ype <span style="letter-spacing:0.2px">(</span><span style="letter-spacing:-0.9px">S</span><span style="letter-spacing:-0.9px">T</span><span style="letter-spacing:-0.9px">R</span><span style="letter-spacing:-0.9px">U</span><span style="letter-spacing:-0.9px">C</span><span style="letter-spacing:-0.9px">T</span><span style="letter-spacing:0.2px">)</span></div>
<svg style="left:136px;top:290px" width="16" height="16" viewBox="0 0 16 16"><path d="M2.5 1.5h9l3 3v10h-12z" fill="#fff" stroke="#333"/><path d="M11 6h2M11 8h2M11 10h2M11 12h2" stroke="#bbb"/><rect x="6" y="2" width="4" height="4" fill="#e01010"/><rect x="6" y="5" width="4" height="4" fill="#f0e020"/><rect x="8" y="7" width="4" height="4" fill="#e02080" stroke="#3030a0" stroke-width=".6"/><rect x="1.5" y="7.5" width="4" height="4" fill="#f0f030" stroke="#20b020" stroke-width="1.2"/></svg>
<div class="t" style="left:157px;top:290.8px;line-height:16px;font-size:11px;color:#000;letter-spacing:-0.3px"><span style="letter-spacing:-0.9px">P</span>rocess<span style="letter-spacing:-0.9px">I</span>mage<span style="letter-spacing:0.2px">0</span><span style="letter-spacing:0.2px">1</span></div>
<svg style="left:136px;top:308px" width="16" height="16" viewBox="0 0 16 16"><path d="M2.5 1.5h9l3 3v10h-12z" fill="#fff" stroke="#333"/><path d="M11 6h2M11 8h2M11 10h2M11 12h2" stroke="#bbb"/><rect x="6" y="2" width="4" height="4" fill="#e01010"/><rect x="6" y="5" width="4" height="4" fill="#f0e020"/><rect x="8" y="7" width="4" height="4" fill="#e02080" stroke="#3030a0" stroke-width=".6"/><rect x="1.5" y="7.5" width="4" height="4" fill="#f0f030" stroke="#20b020" stroke-width="1.2"/></svg>
<div class="t" style="left:157px;top:309.1px;line-height:16px;font-size:11px;color:#000;letter-spacing:-0.3px"><span style="letter-spacing:-0.9px">P</span>rocess<span style="letter-spacing:-0.9px">I</span>mage<span style="letter-spacing:0.2px">0</span><span style="letter-spacing:0.2px">2</span></div>
<svg style="left:136px;top:326px" width="16" height="16" viewBox="0 0 16 16"><path d="M2.5 1.5h9l3 3v10h-12z" fill="#fff" stroke="#333"/><path d="M11 6h2M11 8h2M11 10h2M11 12h2" stroke="#bbb"/><rect x="6" y="2" width="4" height="4" fill="#e01010"/><rect x="6" y="5" width="4" height="4" fill="#f0e020"/><rect x="8" y="7" width="4" height="4" fill="#e02080" stroke="#3030a0" stroke-width=".6"/><rect x="1.5" y="7.5" width="4" height="4" fill="#f0f030" stroke="#20b020" stroke-width="1.2"/></svg>
<div class="t" style="left:157px;top:327.4px;line-height:16px;font-size:11px;color:#000;letter-spacing:-0.3px"><span style="letter-spacing:-0.9px">P</span>rocess<span style="letter-spacing:-0.9px">I</span>mage<span style="letter-spacing:0.2px">0</span><span style="letter-spacing:0.2px">3</span></div>
<svg style="left:136px;top:345px" width="16" height="16" viewBox="0 0 16 16"><path d="M2.5 1.5h9l3 3v10h-12z" fill="#fff" stroke="#333"/><path d="M11 6h2M11 8h2M11 10h2M11 12h2" stroke="#bbb"/><rect x="6" y="2" width="4" height="4" fill="#e01010"/><rect x="6" y="5" width="4" height="4" fill="#f0e020"/><rect x="8" y="7" width="4" height="4" fill="#e02080" stroke="#3030a0" stroke-width=".6"/><rect x="1.5" y="7.5" width="4" height="4" fill="#f0f030" stroke="#20b020" stroke-width="1.2"/></svg>
<div class="t" style="left:157px;top:345.7px;line-height:16px;font-size:11px;color:#000;letter-spacing:-0.3px"><span style="letter-spacing:-0.9px">P</span>rocess<span style="letter-spacing:-0.9px">I</span>mage<span style="letter-spacing:0.2px">0</span><span style="letter-spacing:0.2px">4</span></div>
<svg style="left:136px;top:363px" width="16" height="16" viewBox="0 0 16 16"><path d="M2.5 1.5h9l3 3v10h-12z" fill="#fff" stroke="#333"/><path d="M11 6h2M11 8h2M11 10h2M11 12h2" stroke="#bbb"/><rect x="6" y="2" width="4" height="4" fill="#e01010"/><rect x="6" y="5" width="4" height="4" fill="#f0e020"/><rect x="8" y="7" width="4" height="4" fill="#e02080" stroke="#3030a0" stroke-width=".6"/><rect x="1.5" y="7.5" width="4" height="4" fill="#f0f030" stroke="#20b020" stroke-width="1.2"/></svg>
<div class="t" style="left:157px;top:364.0px;line-height:16px;font-size:11px;color:#000;letter-spacing:-0.3px"><span style="letter-spacing:-0.9px">P</span>rocess<span style="letter-spacing:-0.9px">I</span>mage<span style="letter-spacing:0.2px">0</span><span style="letter-spacing:0.2px">5</span></div>
<svg style="left:136px;top:381px" width="16" height="16" viewBox="0 0 16 16"><path d="M2.5 1.5h9l3 3v10h-12z" fill="#fff" stroke="#333"/><path d="M11 6h2M11 8h2M11 10h2M11 12h2" stroke="#bbb"/><rect x="6" y="2" width="4" height="4" fill="#e01010"/><rect x="6" y="5" width="4" height="4" fill="#f0e020"/><rect x="8" y="7" width="4" height="4" fill="#e02080" stroke="#3030a0" stroke-width=".6"/><rect x="1.5" y="7.5" width="4" height="4" fill="#f0f030" stroke="#20b020" stroke-width="1.2"/></svg>
<div class="t" style="left:157px;top:382.3px;line-height:16px;font-size:11px;color:#000;letter-spacing:-0.3px"><span style="letter-spacing:-0.9px">P</span>rocess<span style="letter-spacing:-0.9px">I</span>mage<span style="letter-spacing:0.2px">0</span><span style="letter-spacing:0.2px">6</span></div>
<svg style="left:136px;top:400px" width="16" height="16" viewBox="0 0 16 16"><path d="M2.5 1.5h9l3 3v10h-12z" fill="#fff" stroke="#333"/><path d="M11 6h2M11 8h2M11 10h2M11 12h2" stroke="#bbb"/><rect x="6" y="2" width="4" height="4" fill="#e01010"/><rect x="6" y="5" width="4" height="4" fill="#f0e020"/><rect x="8" y="7" width="4" height="4" fill="#e02080" stroke="#3030a0" stroke-width=".6"/><rect x="1.5" y="7.5" width="4" height="4" fill="#f0f030" stroke="#20b020" stroke-width="1.2"/></svg>
<div class="t" style="left:157px;top:400.6px;line-height:16px;font-size:11px;color:#000;letter-spacing:-0.3px"><span style="letter-spacing:-0.9px">P</span>rocess<span style="letter-spacing:-0.9px">I</span>mage<span style="letter-spacing:0.2px">0</span><span style="letter-spacing:0.2px">7</span></div>
<svg style="left:136px;top:418px" width="16" height="16" viewBox="0 0 16 16"><path d="M2.5 1.5h9l3 3v10h-12z" fill="#fff" stroke="#333"/><path d="M11 6h2M11 8h2M11 10h2M11 12h2" stroke="#bbb"/><rect x="6" y="2" width="4" height="4" fill="#e01010"/><rect x="6" y="5" width="4" height="4" fill="#f0e020"/><rect x="8" y="7" width="4" height="4" fill="#e02080" stroke="#3030a0" stroke-width=".6"/><rect x="1.5" y="7.5" width="4" height="4" fill="#f0f030" stroke="#20b020" stroke-width="1.2"/></svg>
<div class="t" style="left:157px;top:419.0px;line-height:16px;font-size:11px;color:#000;letter-spacing:-0.3px"><span style="letter-spacing:-0.9px">P</span>rocess<span style="letter-spacing:-0.9px">I</span>mage<span style="letter-spacing:0.2px">0</span><span style="letter-spacing:0.2px">8</span></div>
<svg style="left:136px;top:436px" width="16" height="16" viewBox="0 0 16 16"><path d="M2.5 1.5h9l3 3v10h-12z" fill="#fff" stroke="#333"/><path d="M11 6h2M11 8h2M11 10h2M11 12h2" stroke="#bbb"/><rect x="6" y="2" width="4" height="4" fill="#e01010"/><rect x="6" y="5" width="4" height="4" fill="#f0e020"/><rect x="8" y="7" width="4" height="4" fill="#e02080" stroke="#3030a0" stroke-width=".6"/><rect x="1.5" y="7.5" width="4" height="4" fill="#f0f030" stroke="#20b020" stroke-width="1.2"/></svg>
<div class="t" style="left:157px;top:437.3px;line-height:16px;font-size:11px;color:#000;letter-spacing:-0.3px"><span style="letter-spacing:-0.9px">P</span>rocess<span style="letter-spacing:-0.9px">I</span>mage<span style="letter-spacing:0.2px">0</span><span style="letter-spacing:0.2px">9</span></div>
<svg style="left:136px;top:455px" width="16" height="16" viewBox="0 0 16 16"><path d="M2.5 1.5h9l3 3v10h-12z" fill="#fff" stroke="#333"/><path d="M11 6h2M11 8h2M11 10h2M11 12h2" stroke="#bbb"/><rect x="6" y="2" width="4" height="4" fill="#e01010"/><rect x="6" y="5" width="4" height="4" fill="#f0e020"/><rect x="8" y="7" width="4" height="4" fill="#e02080" stroke="#3030a0" stroke-width=".6"/><rect x="1.5" y="7.5" width="4" height="4" fill="#f0f030" stroke="#20b020" stroke-width="1.2"/></svg>
<div class="t" style="left:157px;top:455.6px;line-height:16px;font-size:11px;color:#000;letter-spacing:-0.3px"><span style="letter-spacing:-0.9px">P</span>rocess<span style="letter-spacing:-0.9px">I</span>mage<span style="letter-spacing:0.2px">1</span><span style="letter-spacing:0.2px">0</span></div>
<svg style="left:117px;top:473px" width="16" height="16" viewBox="0 0 16 16"><defs><radialGradient id="gg" cx="0.4" cy="0.35" r="0.75"><stop offset="0" stop-color="#7ac8ff"/><stop offset="0.55" stop-color="#1a60d8"/><stop offset="1" stop-color="#0a2a8a"/></radialGradient></defs><circle cx="8" cy="8.5" r="7" fill="url(#gg)"/><path d="M2.5 7c1-2.5 3.5-2.5 4.5-.5s-1 3 .5 5-2.5 2.5-3.5.5-2.5-2-1.5-5z" fill="#2a9a30"/><path d="M9 3.5c2.5 0 5 2.5 4 5s-2.5 3-3.5 2 1-3-1-4.5z" fill="#2a9a30"/><path d="M1 11c3-8 11-10 14.5-7.5" stroke="#fff" stroke-width="1.1" fill="none" opacity=".9"/></svg>
<div class="t" style="left:138px;top:473.9px;line-height:16px;font-size:11px;color:#000;letter-spacing:-0.3px">gvl<span style="letter-spacing:-0.9px">C</span>onfiguration<span style="letter-spacing:-0.9px">C</span>ontroller</div>
<svg style="left:117px;top:491px" width="16" height="16" viewBox="0 0 16 16"><defs><radialGradient id="gg" cx="0.4" cy="0.35" r="0.75"><stop offset="0" stop-color="#7ac8ff"/><stop offset="0.55" stop-color="#1a60d8"/><stop offset="1" stop-color="#0a2a8a"/></radialGradient></defs><circle cx="8" cy="8.5" r="7" fill="url(#gg)"/><path d="M2.5 7c1-2.5 3.5-2.5 4.5-.5s-1 3 .5 5-2.5 2.5-3.5.5-2.5-2-1.5-5z" fill="#2a9a30"/><path d="M9 3.5c2.5 0 5 2.5 4 5s-2.5 3-3.5 2 1-3-1-4.5z" fill="#2a9a30"/><path d="M1 11c3-8 11-10 14.5-7.5" stroke="#fff" stroke-width="1.1" fill="none" opacity=".9"/></svg>
<div class="t" style="left:138px;top:492.2px;line-height:16px;font-size:11px;color:#000;letter-spacing:-0.3px">gvl<span style="letter-spacing:-0.9px">C</span>onfiguration<span style="letter-spacing:-0.9px">G</span>enerator</div>
<svg style="left:117px;top:510px" width="16" height="16" viewBox="0 0 16 16"><defs><radialGradient id="gg" cx="0.4" cy="0.35" r="0.75"><stop offset="0" stop-color="#7ac8ff"/><stop offset="0.55" stop-color="#1a60d8"/><stop offset="1" stop-color="#0a2a8a"/></radialGradient></defs><circle cx="8" cy="8.5" r="7" fill="url(#gg)"/><path d="M2.5 7c1-2.5 3.5-2.5 4.5-.5s-1 3 .5 5-2.5 2.5-3.5.5-2.5-2-1.5-5z" fill="#2a9a30"/><path d="M9 3.5c2.5 0 5 2.5 4 5s-2.5 3-3.5 2 1-3-1-4.5z" fill="#2a9a30"/><path d="M1 11c3-8 11-10 14.5-7.5" stroke="#fff" stroke-width="1.1" fill="none" opacity=".9"/></svg>
<div class="t" style="left:138px;top:510.5px;line-height:16px;font-size:11px;color:#000;letter-spacing:-0.3px">gvl<span style="letter-spacing:-0.9px">C</span>onfiguration<span style="letter-spacing:-0.9px">P</span>rocess<span style="letter-spacing:-0.9px">I</span>mage</div>
<svg style="left:117px;top:528px" width="16" height="16" viewBox="0 0 16 16"><defs><radialGradient id="gg" cx="0.4" cy="0.35" r="0.75"><stop offset="0" stop-color="#7ac8ff"/><stop offset="0.55" stop-color="#1a60d8"/><stop offset="1" stop-color="#0a2a8a"/></radialGradient></defs><circle cx="8" cy="8.5" r="7" fill="url(#gg)"/><path d="M2.5 7c1-2.5 3.5-2.5 4.5-.5s-1 3 .5 5-2.5 2.5-3.5.5-2.5-2-1.5-5z" fill="#2a9a30"/><path d="M9 3.5c2.5 0 5 2.5 4 5s-2.5 3-3.5 2 1-3-1-4.5z" fill="#2a9a30"/><path d="M1 11c3-8 11-10 14.5-7.5" stroke="#fff" stroke-width="1.1" fill="none" opacity=".9"/></svg>
<div class="t" style="left:138px;top:528.8px;line-height:16px;font-size:11px;color:#000;letter-spacing:-0.3px">gvl<span style="letter-spacing:-0.9px">O</span>em</div>
<svg style="left:117px;top:546px" width="16" height="16" viewBox="0 0 16 16"><defs><radialGradient id="gg" cx="0.4" cy="0.35" r="0.75"><stop offset="0" stop-color="#7ac8ff"/><stop offset="0.55" stop-color="#1a60d8"/><stop offset="1" stop-color="#0a2a8a"/></radialGradient></defs><circle cx="8" cy="8.5" r="7" fill="url(#gg)"/><path d="M2.5 7c1-2.5 3.5-2.5 4.5-.5s-1 3 .5 5-2.5 2.5-3.5.5-2.5-2-1.5-5z" fill="#2a9a30"/><path d="M9 3.5c2.5 0 5 2.5 4 5s-2.5 3-3.5 2 1-3-1-4.5z" fill="#2a9a30"/><path d="M1 11c3-8 11-10 14.5-7.5" stroke="#fff" stroke-width="1.1" fill="none" opacity=".9"/></svg>
<div class="t" style="left:138px;top:547.1px;line-height:16px;font-size:11px;color:#000;letter-spacing:-0.3px">gvl<span style="letter-spacing:-0.9px">O</span>em<span style="letter-spacing:-0.9px">C</span>onfig</div>
<svg style="left:117px;top:564px" width="16" height="16" viewBox="0 0 16 16"><path d="M3.5 1.5h7l3 3v10h-10z" fill="#fff" stroke="#333"/><path d="M5 5h3M9 5h3M5 8h3M9 8h3M5 11h3M9 11h3" stroke="#999"/><rect x="1" y="9" width="2" height="4" fill="#1a9a9a"/></svg>
<div class="t" style="left:138px;top:565.4px;line-height:16px;font-size:11px;color:#000;letter-spacing:-0.3px"><span style="letter-spacing:-0.9px">I</span>mage<span style="letter-spacing:-0.9px">P</span>ool<span style="letter-spacing:-2px">_</span><span style="letter-spacing:-0.9px">O</span><span style="letter-spacing:-0.9px">E</span><span style="letter-spacing:-0.9px">M</span></div>
<svg style="left:117px;top:583px" width="16" height="16" viewBox="0 0 16 16"><path d="M3.5 1.5h7l3 3v10h-10z" fill="#fff" stroke="#333"/><path d="M5 5h3M9 5h3M5 8h3M9 8h3M5 11h3M9 11h3" stroke="#999"/><rect x="1" y="9" width="2" height="4" fill="#1a9a9a"/></svg>
<div class="t" style="left:138px;top:583.8px;line-height:16px;font-size:11px;color:#000;letter-spacing:-0.3px"><span style="letter-spacing:-0.9px">T</span><span style="letter-spacing:-0.9px">L</span><span style="letter-spacing:-2px">_</span><span style="letter-spacing:-0.9px">O</span><span style="letter-spacing:-0.9px">E</span><span style="letter-spacing:-0.9px">M</span></div>
<svg style="left:84px;top:605px" width="9" height="9" viewBox="0 0 9 9"><defs><linearGradient id="eg" x1="0" y1="0" x2="0" y2="1"><stop offset="0" stop-color="#fff"/><stop offset="1" stop-color="#d8d8d8"/></linearGradient></defs><rect x="0.5" y="0.5" width="8" height="8" fill="url(#eg)" stroke="#a8cccc"/><path d="M2 4.5h5" stroke="#000" stroke-width="1.3"/><path d="M4.5 2v5" stroke="#000" stroke-width="1.3"/></svg>
<svg style="left:98px;top:601px" width="16" height="16" viewBox="0 0 16 16"><defs><linearGradient id="fg" x1="0" y1="0" x2="0" y2="1"><stop offset="0" stop-color="#fff8c8"/><stop offset="1" stop-color="#f2c640"/></linearGradient></defs><path d="M1.5 3q0-1 1-1h4l1.5 1.5h6q1 0 1 1v8.5q0 1-1 1h-11.5q-1 0-1-1z" fill="url(#fg)" stroke="#b87c18"/><path d="M2 6h13" stroke="#e0b040"/></svg>
<div class="t" style="left:119px;top:602.1px;line-height:16px;font-size:11px;color:#000;letter-spacing:-0.3px"><span style="letter-spacing:-0.9px">B</span>ootapplication</div>
<svg style="left:98px;top:619px" width="16" height="16" viewBox="0 0 16 16"><rect x="1.5" y="5.5" width="4" height="9" fill="#10c8d8" stroke="#111"/><path d="M1.5 5.5l2-3h3l-1 3z" fill="#80f0f8" stroke="#111"/><rect x="5.5" y="6.5" width="4" height="8" fill="#e00000" stroke="#111"/><rect x="9.5" y="5.5" width="4" height="9" fill="#f0e000" stroke="#111"/><path d="M9.5 5.5l2-2h3v9l-1 2" fill="#c8b800" stroke="#111"/></svg>
<div class="t" style="left:119px;top:620.4px;line-height:16px;font-size:11px;color:#000;letter-spacing:-0.3px"><span style="letter-spacing:-0.9px">L</span>ibrary <span style="letter-spacing:-0.9px">M</span>anager</div>
<svg style="left:84px;top:642px" width="9" height="9" viewBox="0 0 9 9"><defs><linearGradient id="eg" x1="0" y1="0" x2="0" y2="1"><stop offset="0" stop-color="#fff"/><stop offset="1" stop-color="#d8d8d8"/></linearGradient></defs><rect x="0.5" y="0.5" width="8" height="8" fill="url(#eg)" stroke="#a8cccc"/><path d="M2 4.5h5" stroke="#000" stroke-width="1.3"/><path d="M4.5 2v5" stroke="#000" stroke-width="1.3"/></svg>
<svg style="left:98px;top:638px" width="16" height="16" viewBox="0 0 16 16"><path d="M1.5 0.5h9l3 3v12h-12z" fill="#fff" stroke="#222"/><path d="M10.5 0.5v3h3" fill="none" stroke="#222"/><path d="M3 3.5h7M3 5.5h7M3 7.5h7M3 9.5h7M3 11.5h7" stroke="#3048f0" stroke-width="1.3"/></svg>
<div class="t" style="left:119px;top:638.7px;line-height:16px;font-size:11px;color:#000;letter-spacing:-0.3px"><span style="letter-spacing:-0.9px">P</span><span style="letter-spacing:-0.9px">R</span><span style="letter-spacing:-0.9px">G</span><span style="letter-spacing:-2px">_</span><span style="letter-spacing:-0.9px">P</span><span style="letter-spacing:-0.9px">L</span><span style="letter-spacing:-0.9px">C</span> <span style="letter-spacing:0.2px">(</span><span style="letter-spacing:-0.9px">P</span><span style="letter-spacing:-0.9px">R</span><span style="letter-spacing:-0.9px">G</span><span style="letter-spacing:0.2px">)</span></div>
<svg style="left:98px;top:656px" width="16" height="16" viewBox="0 0 16 16"><path d="M1.5 0.5h9l3 3v12h-12z" fill="#fff" stroke="#222"/><path d="M10.5 0.5v3h3" fill="none" stroke="#222"/><path d="M3 3.5h7M3 5.5h7M3 7.5h7M3 9.5h7M3 11.5h7" stroke="#3048f0" stroke-width="1.3"/></svg>
<div class="t" style="left:119px;top:657.0px;line-height:16px;font-size:11px;color:#000;letter-spacing:-0.3px"><span style="letter-spacing:-0.9px">P</span><span style="letter-spacing:-0.9px">R</span><span style="letter-spacing:-0.9px">G</span><span style="letter-spacing:-2px">_</span><span style="letter-spacing:-0.9px">P</span><span style="letter-spacing:-0.9px">L</span><span style="letter-spacing:-0.9px">C</span><span style="letter-spacing:-2px">_</span><span style="letter-spacing:-0.9px">A</span>larms <span style="letter-spacing:0.2px">(</span><span style="letter-spacing:-0.9px">P</span><span style="letter-spacing:-0.9px">R</span><span style="letter-spacing:-0.9px">G</span><span style="letter-spacing:0.2px">)</span></div>
<svg style="left:98px;top:674px" width="16" height="16" viewBox="0 0 16 16"><path d="M1.5 0.5h9l3 3v12h-12z" fill="#fff" stroke="#222"/><path d="M10.5 0.5v3h3" fill="none" stroke="#222"/><path d="M3 3.5h7M3 5.5h7M3 7.5h7M3 9.5h7M3 11.5h7" stroke="#3048f0" stroke-width="1.3"/></svg>
<div class="t" style="left:119px;top:675.3px;line-height:16px;font-size:11px;color:#000;letter-spacing:-0.3px"><span style="letter-spacing:-0.9px">P</span><span style="letter-spacing:-0.9px">R</span><span style="letter-spacing:-0.9px">G</span><span style="letter-spacing:-2px">_</span><span style="letter-spacing:-0.9px">V</span>isu <span style="letter-spacing:0.2px">(</span><span style="letter-spacing:-0.9px">P</span><span style="letter-spacing:-0.9px">R</span><span style="letter-spacing:-0.9px">G</span><span style="letter-spacing:0.2px">)</span></div>
<svg style="left:84px;top:697px" width="9" height="9" viewBox="0 0 9 9"><defs><linearGradient id="eg" x1="0" y1="0" x2="0" y2="1"><stop offset="0" stop-color="#fff"/><stop offset="1" stop-color="#d8d8d8"/></linearGradient></defs><rect x="0.5" y="0.5" width="8" height="8" fill="url(#eg)" stroke="#a8cccc"/><path d="M2 4.5h5" stroke="#000" stroke-width="1.3"/></svg>
<svg style="left:98px;top:693px" width="16" height="16" viewBox="0 0 16 16"><rect x="1.5" y="1.5" width="12" height="12" fill="#d8d8d8" stroke="#333"/><path d="M5.5 2v11M9.5 2v11" stroke="#777"/><rect x="2.5" y="3" width="2" height="2" fill="#20c020"/><rect x="6.5" y="3" width="2" height="2" fill="#d02020"/><rect x="10.5" y="3" width="2" height="2" fill="#d02020"/><circle cx="10.5" cy="11" r="3.8" fill="#f4f020" stroke="#333" stroke-dasharray="1.3 .9"/><circle cx="10.5" cy="11" r="1.3" fill="#555"/></svg>
<div class="t" style="left:119px;top:693.6px;line-height:16px;font-size:11px;color:#000;letter-spacing:-0.3px"><span style="letter-spacing:-0.9px">T</span>ask <span style="letter-spacing:-0.9px">C</span>onfiguration</div>
<svg style="left:103px;top:715px" width="9" height="9" viewBox="0 0 9 9"><defs><linearGradient id="eg" x1="0" y1="0" x2="0" y2="1"><stop offset="0" stop-color="#fff"/><stop offset="1" stop-color="#d8d8d8"/></linearGradient></defs><rect x="0.5" y="0.5" width="8" height="8" fill="url(#eg)" stroke="#a8cccc"/><path d="M2 4.5h5" stroke="#000" stroke-width="1.3"/></svg>
<svg style="left:117px;top:711px" width="16" height="16" viewBox="0 0 16 16"><path d="M1.5 11.5v1.5L7.5 16 15 12V10.5" fill="#fff" stroke="#333"/><path d="M1.5 10v1.5L7.5 14.5 15 10.5V9" fill="#fff" stroke="#333"/><path d="M1.5 8.5L9 4.5 15 8 7.5 12z" fill="#fff" stroke="#333"/><path d="M8.5 0.5v5" stroke="#1a2aa0" stroke-width="2"/><path d="M5.5 4.5l3 3.5 3-3.5z" fill="#1a2aa0"/></svg>
<div class="t" style="left:138px;top:711.9px;line-height:16px;font-size:11px;color:#000;letter-spacing:-0.3px"><span style="letter-spacing:-0.9px">M</span>ain<span style="letter-spacing:-0.9px">T</span>ask</div>
<svg style="left:136px;top:729px" width="16" height="16" viewBox="0 0 16 16"><path d="M3.5 0.5h8l3 3v12h-11z" fill="#fff" stroke="#222"/><path d="M11.5 0.5v3h3" fill="none" stroke="#222"/><path d="M10 6.5h3M10 8.5h3M10 10.5h3M10 12.5h3" stroke="#aaa"/><rect x="5.5" y="2.5" width="3.5" height="4" fill="none" stroke="#c02020" stroke-width="1.3"/><rect x="5.5" y="7" width="3.5" height="4" fill="#fff" stroke="#2020b0" stroke-width="1.3"/><rect x="1.5" y="7" width="4" height="4" fill="none" stroke="#10a010" stroke-width="1.3"/></svg>
<div class="t" style="left:157px;top:730.2px;line-height:16px;font-size:11px;color:#000;letter-spacing:-0.3px"><span style="letter-spacing:-0.9px">P</span><span style="letter-spacing:-0.9px">R</span><span style="letter-spacing:-0.9px">G</span><span style="letter-spacing:-2px">_</span><span style="letter-spacing:-0.9px">P</span><span style="letter-spacing:-0.9px">L</span><span style="letter-spacing:-0.9px">C</span></div>
<svg style="left:136px;top:748px" width="16" height="16" viewBox="0 0 16 16"><path d="M3.5 0.5h8l3 3v12h-11z" fill="#fff" stroke="#222"/><path d="M11.5 0.5v3h3" fill="none" stroke="#222"/><path d="M10 6.5h3M10 8.5h3M10 10.5h3M10 12.5h3" stroke="#aaa"/><rect x="5.5" y="2.5" width="3.5" height="4" fill="none" stroke="#c02020" stroke-width="1.3"/><rect x="5.5" y="7" width="3.5" height="4" fill="#fff" stroke="#2020b0" stroke-width="1.3"/><rect x="1.5" y="7" width="4" height="4" fill="none" stroke="#10a010" stroke-width="1.3"/></svg>
<div class="t" style="left:157px;top:748.5px;line-height:16px;font-size:11px;color:#000;letter-spacing:-0.3px"><span style="letter-spacing:-0.9px">P</span><span style="letter-spacing:-0.9px">R</span><span style="letter-spacing:-0.9px">G</span><span style="letter-spacing:-2px">_</span><span style="letter-spacing:-0.9px">V</span>isu</div>
<svg style="left:136px;top:766px" width="16" height="16" viewBox="0 0 16 16"><path d="M3.5 0.5h8l3 3v12h-11z" fill="#fff" stroke="#222"/><path d="M11.5 0.5v3h3" fill="none" stroke="#222"/><path d="M10 6.5h3M10 8.5h3M10 10.5h3M10 12.5h3" stroke="#aaa"/><rect x="5.5" y="2.5" width="3.5" height="4" fill="none" stroke="#c02020" stroke-width="1.3"/><rect x="5.5" y="7" width="3.5" height="4" fill="#fff" stroke="#2020b0" stroke-width="1.3"/><rect x="1.5" y="7" width="4" height="4" fill="none" stroke="#10a010" stroke-width="1.3"/></svg>
<div class="t" style="left:157px;top:766.8px;line-height:16px;font-size:11px;color:#000;letter-spacing:-0.3px"><span style="letter-spacing:-0.9px">P</span><span style="letter-spacing:-0.9px">R</span><span style="letter-spacing:-0.9px">G</span><span style="letter-spacing:-2px">_</span><span style="letter-spacing:-0.9px">P</span><span style="letter-spacing:-0.9px">L</span><span style="letter-spacing:-0.9px">C</span><span style="letter-spacing:-2px">_</span><span style="letter-spacing:-0.9px">A</span>larms</div>
<svg style="left:103px;top:788px" width="9" height="9" viewBox="0 0 9 9"><defs><linearGradient id="eg" x1="0" y1="0" x2="0" y2="1"><stop offset="0" stop-color="#fff"/><stop offset="1" stop-color="#d8d8d8"/></linearGradient></defs><rect x="0.5" y="0.5" width="8" height="8" fill="url(#eg)" stroke="#a8cccc"/><path d="M2 4.5h5" stroke="#000" stroke-width="1.3"/></svg>
<svg style="left:117px;top:784px" width="16" height="16" viewBox="0 0 16 16"><path d="M1.5 11.5v1.5L7.5 16 15 12V10.5" fill="#fff" stroke="#333"/><path d="M1.5 10v1.5L7.5 14.5 15 10.5V9" fill="#fff" stroke="#333"/><path d="M1.5 8.5L9 4.5 15 8 7.5 12z" fill="#fff" stroke="#333"/><path d="M8.5 0.5v5" stroke="#1a2aa0" stroke-width="2"/><path d="M5.5 4.5l3 3.5 3-3.5z" fill="#1a2aa0"/></svg>
<div class="t" style="left:138px;top:785.2px;line-height:16px;font-size:11px;color:#000;letter-spacing:-0.3px"><span style="letter-spacing:-0.9px">S</span>ave<span style="letter-spacing:-0.9px">R</span>etain<span style="letter-spacing:-0.9px">T</span>ask</div>
<svg style="left:136px;top:802px" width="16" height="16" viewBox="0 0 16 16"><path d="M3.5 0.5h8l3 3v12h-11z" fill="#fff" stroke="#222"/><path d="M11.5 0.5v3h3" fill="none" stroke="#222"/><path d="M10 6.5h3M10 8.5h3M10 10.5h3M10 12.5h3" stroke="#aaa"/><rect x="5.5" y="2.5" width="3.5" height="4" fill="none" stroke="#c02020" stroke-width="1.3"/><rect x="5.5" y="7" width="3.5" height="4" fill="#fff" stroke="#2020b0" stroke-width="1.3"/><rect x="1.5" y="7" width="4" height="4" fill="none" stroke="#10a010" stroke-width="1.3"/></svg>
<div class="t" style="left:157px;top:803.5px;line-height:16px;font-size:11px;color:#000;letter-spacing:-0.3px"><span style="letter-spacing:-0.9px">P</span><span style="letter-spacing:-0.9px">R</span><span style="letter-spacing:-0.9px">G</span><span style="letter-spacing:-2px">_</span><span style="letter-spacing:-0.9px">S</span>ave<span style="letter-spacing:-0.9px">R</span>etain</div>
<svg style="left:103px;top:825px" width="9" height="9" viewBox="0 0 9 9"><defs><linearGradient id="eg" x1="0" y1="0" x2="0" y2="1"><stop offset="0" stop-color="#fff"/><stop offset="1" stop-color="#d8d8d8"/></linearGradient></defs><rect x="0.5" y="0.5" width="8" height="8" fill="url(#eg)" stroke="#a8cccc"/><path d="M2 4.5h5" stroke="#000" stroke-width="1.3"/></svg>
<svg style="left:117px;top:821px" width="16" height="16" viewBox="0 0 16 16"><path d="M1.5 11.5v1.5L7.5 16 15 12V10.5" fill="#fff" stroke="#333"/><path d="M1.5 10v1.5L7.5 14.5 15 10.5V9" fill="#fff" stroke="#333"/><path d="M1.5 8.5L9 4.5 15 8 7.5 12z" fill="#fff" stroke="#333"/><path d="M8.5 0.5v5" stroke="#1a2aa0" stroke-width="2"/><path d="M5.5 4.5l3 3.5 3-3.5z" fill="#1a2aa0"/></svg>
<div class="t" style="left:138px;top:821.8px;line-height:16px;font-size:11px;color:#000;letter-spacing:-0.3px"><span style="letter-spacing:-0.9px">V</span><span style="letter-spacing:-0.9px">I</span><span style="letter-spacing:-0.9px">S</span><span style="letter-spacing:-0.9px">U</span><span style="letter-spacing:-2px">_</span><span style="letter-spacing:-0.9px">T</span><span style="letter-spacing:-0.9px">A</span><span style="letter-spacing:-0.9px">S</span><span style="letter-spacing:-0.9px">K</span></div>
<svg style="left:136px;top:839px" width="16" height="16" viewBox="0 0 16 16"><path d="M3.5 0.5h8l3 3v12h-11z" fill="#fff" stroke="#222"/><path d="M11.5 0.5v3h3" fill="none" stroke="#222"/><path d="M10 6.5h3M10 8.5h3M10 10.5h3M10 12.5h3" stroke="#aaa"/><rect x="5.5" y="2.5" width="3.5" height="4" fill="none" stroke="#c02020" stroke-width="1.3"/><rect x="5.5" y="7" width="3.5" height="4" fill="#fff" stroke="#2020b0" stroke-width="1.3"/><rect x="1.5" y="7" width="4" height="4" fill="none" stroke="#10a010" stroke-width="1.3"/></svg>
<div class="t" style="left:157px;top:840.1px;line-height:16px;font-size:11px;color:#000;letter-spacing:-0.3px"><span style="letter-spacing:-0.9px">V</span>isu<span style="letter-spacing:-0.9px">E</span>lems.<span style="letter-spacing:-0.9px">V</span>isu<span style="letter-spacing:-2px">_</span><span style="letter-spacing:-0.9px">P</span>rg</div>
<svg style="left:136px;top:857px" width="16" height="16" viewBox="0 0 16 16"><path d="M3.5 0.5h8l3 3v12h-11z" fill="#fff" stroke="#222"/><path d="M11.5 0.5v3h3" fill="none" stroke="#222"/><path d="M10 6.5h3M10 8.5h3M10 10.5h3M10 12.5h3" stroke="#aaa"/><rect x="5.5" y="2.5" width="3.5" height="4" fill="none" stroke="#c02020" stroke-width="1.3"/><rect x="5.5" y="7" width="3.5" height="4" fill="#fff" stroke="#2020b0" stroke-width="1.3"/><rect x="1.5" y="7" width="4" height="4" fill="none" stroke="#10a010" stroke-width="1.3"/></svg>
<div class="t" style="left:157px;top:858.4px;line-height:16px;font-size:11px;color:#000;letter-spacing:-0.3px"><span style="letter-spacing:-0.9px">P</span><span style="letter-spacing:-0.9px">R</span><span style="letter-spacing:-0.9px">G</span><span style="letter-spacing:-2px">_</span><span style="letter-spacing:-0.9px">V</span>isualization</div>
<svg style="left:136px;top:876px" width="16" height="16" viewBox="0 0 16 16"><path d="M3.5 0.5h8l3 3v12h-11z" fill="#fff" stroke="#222"/><path d="M11.5 0.5v3h3" fill="none" stroke="#222"/><path d="M10 6.5h3M10 8.5h3M10 10.5h3M10 12.5h3" stroke="#aaa"/><rect x="5.5" y="2.5" width="3.5" height="4" fill="none" stroke="#c02020" stroke-width="1.3"/><rect x="5.5" y="7" width="3.5" height="4" fill="#fff" stroke="#2020b0" stroke-width="1.3"/><rect x="1.5" y="7" width="4" height="4" fill="none" stroke="#10a010" stroke-width="1.3"/></svg>
<div class="t" style="left:157px;top:876.7px;line-height:16px;font-size:11px;color:#000;letter-spacing:-0.3px"><span style="letter-spacing:-0.9px">P</span><span style="letter-spacing:-0.9px">R</span><span style="letter-spacing:-0.9px">G</span><span style="letter-spacing:-2px">_</span><span style="letter-spacing:-0.9px">V</span>isu<span style="letter-spacing:-0.9px">C</span>lient<span style="letter-spacing:-0.9px">M</span>anager</div>
<svg style="left:84px;top:898px" width="9" height="9" viewBox="0 0 9 9"><defs><linearGradient id="eg" x1="0" y1="0" x2="0" y2="1"><stop offset="0" stop-color="#fff"/><stop offset="1" stop-color="#d8d8d8"/></linearGradient></defs><rect x="0.5" y="0.5" width="8" height="8" fill="url(#eg)" stroke="#a8cccc"/><path d="M2 4.5h5" stroke="#000" stroke-width="1.3"/><path d="M4.5 2v5" stroke="#000" stroke-width="1.3"/></svg>
<svg style="left:98px;top:894px" width="16" height="16" viewBox="0 0 16 16"><path d="M3.5 1.5h8l2 2v11h-10z" fill="#fff" stroke="#333"/><rect x="1" y="6" width="10" height="9" fill="#c01010"/><rect x="4" y="3" width="4" height="4" fill="#f0d020" stroke="#c01010"/><rect x="4" y="9" width="4" height="4" fill="#fff"/></svg>
<div class="t" style="left:119px;top:895.0px;line-height:16px;font-size:11px;color:#000;letter-spacing:-0.3px"><span style="letter-spacing:-0.9px">V</span>isualization <span style="letter-spacing:-0.9px">M</span>anager</div>
<svg style="left:59px;top:912px" width="16" height="16" viewBox="0 0 16 16"><rect x="0.5" y="0.5" width="15" height="15" rx="2.5" fill="#1a4aa0"/><rect x="2" y="2" width="12" height="7" fill="#e4ecf8"/><text x="8" y="8" font-size="6.5" font-weight="bold" text-anchor="middle" fill="#1a4aa0" font-family="Liberation Sans">PLC</text><path d="M2.5 11.5h11M2.5 13.5h11" stroke="#c8d8f0" stroke-dasharray="1.2 1"/></svg>
<div class="t" style="left:80px;top:913.3px;line-height:16px;font-size:11px;color:#000;letter-spacing:-0.3px"><span style="letter-spacing:-0.9px">P</span><span style="letter-spacing:-0.9px">L</span><span style="letter-spacing:-0.9px">C</span><span style="letter-spacing:-2px">_</span><span style="letter-spacing:-0.9px">M</span>anager <span style="letter-spacing:0.2px">(</span><span style="letter-spacing:0.2px">7</span><span style="letter-spacing:0.2px">0</span>.<span style="letter-spacing:0.2px">0</span><span style="letter-spacing:0.2px">0</span><span style="letter-spacing:0.2px">0</span><span style="letter-spacing:0.2px">0</span><span style="letter-spacing:0.2px">)</span></div>
<svg style="left:59px;top:931px" width="16" height="16" viewBox="0 0 16 16"><rect x="0" y="0" width="16" height="16" rx="3" fill="#0a2a8a"/><path d="M1.5 8.5C4 2.5 12 2.5 14.5 8.5C12 5.5 4 5.5 1.5 8.5Z" fill="#fff"/><circle cx="8" cy="7" r="2.3" fill="#fff"/><circle cx="8" cy="7.3" r="1" fill="#0a2a8a"/></svg>
<div class="t" style="left:80px;top:931.6px;line-height:16px;font-size:11px;color:#000;letter-spacing:-0.3px"><span style="letter-spacing:-0.9px">O</span>bserver <span style="letter-spacing:0.2px">(</span><span style="letter-spacing:0.2px">7</span><span style="letter-spacing:0.2px">0</span><span style="letter-spacing:0.2px">5</span><span style="letter-spacing:0.2px">0</span><span style="letter-spacing:0.2px">0</span><span style="letter-spacing:0.2px">2</span><span style="letter-spacing:0.2px">)</span></div>
<svg style="left:45px;top:953px" width="9" height="9" viewBox="0 0 9 9"><defs><linearGradient id="eg" x1="0" y1="0" x2="0" y2="1"><stop offset="0" stop-color="#fff"/><stop offset="1" stop-color="#d8d8d8"/></linearGradient></defs><rect x="0.5" y="0.5" width="8" height="8" fill="url(#eg)" stroke="#a8cccc"/><path d="M2 4.5h5" stroke="#000" stroke-width="1.3"/><path d="M4.5 2v5" stroke="#000" stroke-width="1.3"/></svg>
<svg style="left:59px;top:949px" width="16" height="16" viewBox="0 0 16 16"><rect x="0" y="0" width="16" height="16" rx="3" fill="#0a2a8a"/><rect x="3" y="2.5" width="4" height="6" fill="#fff"/><rect x="9" y="2.5" width="4" height="6" fill="#fff"/><path d="M5 8.5v2.5M11 8.5v2.5M2 11.5h12M2 13.5h12" stroke="#fff"/></svg>
<div class="t" style="left:80px;top:949.9px;line-height:16px;font-size:11px;color:#000;letter-spacing:-0.3px"><span style="letter-spacing:-0.9px">S</span>ystembus <span style="letter-spacing:0.2px">(</span><span style="letter-spacing:0.2px">7</span><span style="letter-spacing:0.2px">0</span><span style="letter-spacing:0.2px">5</span><span style="letter-spacing:0.2px">0</span><span style="letter-spacing:0.2px">0</span><span style="letter-spacing:0.2px">0</span><span style="letter-spacing:0.2px">)</span></div>
<div style="left:296px;top:124px;width:16px;height:17px;background:#e6e6e6;border-left:1px solid #d0d0d0"></div>
<svg style="left:299px;top:129px" width="10" height="6" viewBox="0 0 10 6"><path d="M0 0h9l-4.5 5z" fill="#000"/></svg>
<div style="left:317px;top:101px;width:909px;height:980px;background:#f0f0f0;border:1px solid #a8a8a8;border-right:2px solid #bcbcbc;box-sizing:border-box"></div>
<div style="left:318px;top:102px;width:906px;height:21px;background:#f0f0f0"></div>
<div style="left:318px;top:120px;width:906px;height:2px;background:#bababa"></div>
<svg style="left:318px;top:103px" width="156" height="18" viewBox="0 0 156 18"><path d="M0 18 L12 2 Q13 0.5 15 0.5 L150 0.5 Q154.5 0.5 154.5 4 L154.5 18" fill="#fff" stroke="#c4c4c4"/></svg>
<svg style="left:336px;top:105px" width="16" height="16" viewBox="0 0 16 16"><path d="M2.5 1.5h9l3 3v10h-12z" fill="#fff" stroke="#333"/><path d="M11 6h2M11 8h2M11 10h2M11 12h2" stroke="#bbb"/><rect x="6" y="2" width="4" height="4" fill="#e01010"/><rect x="6" y="5" width="4" height="4" fill="#f0e020"/><rect x="8" y="7" width="4" height="4" fill="#e02080" stroke="#3030a0" stroke-width=".6"/><rect x="1.5" y="7.5" width="4" height="4" fill="#f0f030" stroke="#20b020" stroke-width="1.2"/></svg>
<div class="t" style="left:358px;top:103.5px;line-height:18px;font-size:12px;color:#000;font-weight:bold;letter-spacing:-0.25px">ProcessImage02</div>
<svg style="left:458px;top:108px" width="10" height="10" viewBox="0 0 10 10"><path d="M1 1l8 8M9 1l-8 8" stroke="#000" stroke-width="2"/></svg>
<svg style="left:1211px;top:111px" width="10" height="6" viewBox="0 0 10 6"><path d="M0 0h9l-4.5 5z" fill="#000"/></svg>
<div style="left:318px;top:123px;width:906px;height:21px;background:#f0f0f0"></div>
<div style="left:318px;top:124px;width:109px;height:20px;background:#fff;border-top:1px solid #dadada;border-right:1px solid #dadada;box-sizing:border-box"></div>
<div style="left:427px;top:125px;width:134px;height:19px;background:#ececec;border:1px solid #dcdcdc;border-bottom:none;box-sizing:border-box"></div>
<div style="left:561px;top:125px;width:87px;height:19px;background:#ececec;border:1px solid #dcdcdc;border-bottom:none;box-sizing:border-box"></div>
<div style="left:648px;top:125px;width:126px;height:19px;background:#ececec;border:1px solid #dcdcdc;border-bottom:none;box-sizing:border-box"></div>
<svg style="left:326px;top:127px" width="14" height="12" viewBox="0 0 14 12"><rect x="0.5" y="0.5" width="13" height="10" rx="1" fill="#fff" stroke="#333"/><path d="M2 3.5h3M7 3.5h5M2 6h3M7 6h5M2 8.5h3M7 8.5h5" stroke="#333"/></svg>
<div class="t" style="left:346px;top:126.0px;line-height:16px;font-size:11px;color:#000;letter-spacing:-0.2px">Interface Editor</div>
<svg style="left:432px;top:128px" width="14" height="11" viewBox="0 0 14 11"><rect x="0.5" y="0.5" width="13" height="9" rx="2" fill="#e8e8e8" stroke="#444"/><path d="M3 3h8M3 5h8M3 7h8" stroke="#bbb"/></svg>
<div class="t" style="left:451px;top:127.0px;line-height:16px;font-size:11px;color:#000;letter-spacing:-0.2px">Hotkeys Configuration</div>
<svg style="left:567px;top:127px" width="13" height="14" viewBox="0 0 13 14"><rect x="0.5" y="0.5" width="12" height="13" fill="#fff" stroke="#1a2a8a"/><rect x="1" y="1" width="11" height="2.5" fill="#1a2aa0"/><rect x="1" y="4" width="3" height="2.5" fill="#e02020"/><rect x="1" y="6.5" width="3" height="2.5" fill="#f0e020"/><rect x="1" y="9" width="3" height="2.5" fill="#20b020"/><path d="M5 5.5h6M5 8h6M5 10.5h6" stroke="#666"/></svg>
<div class="t" style="left:587px;top:127.0px;line-height:16px;font-size:11px;color:#000;letter-spacing:-0.2px">Element List</div>
<svg style="left:656px;top:127px" width="14" height="12" viewBox="0 0 14 12"><rect x="0.5" y="0.5" width="13" height="10" rx="1" fill="#fff" stroke="#333"/><path d="M2 3.5h3M7 3.5h5M2 6h3M7 6h5M2 8.5h3M7 8.5h5" stroke="#333"/></svg>
<div class="t" style="left:675px;top:127.0px;line-height:16px;font-size:11px;color:#000;letter-spacing:-0.2px">Frame Configuration</div>
<div style="left:318px;top:144px;width:906px;height:176px;background:#fff"></div>
<div style="left:368px;top:146px;width:1px;height:171px;background:#c8c8c8"></div>
<svg style="left:322px;top:148px" width="10" height="10" viewBox="0 0 10 10"><rect x="0.5" y="0.5" width="9" height="9" fill="#fff" stroke="#4a88c8"/><path d="M0.5 4.5h9" stroke="#4a88c8"/></svg>
<div class="t" style="left:359.5px;top:146.0px;line-height:14px;font-size:10px;color:#4a7ab8;">1</div>
<div class="t" style="left:359.5px;top:162.5px;line-height:14px;font-size:10px;color:#4a7ab8;">2</div>
<div class="t" style="left:359.5px;top:179.0px;line-height:14px;font-size:10px;color:#c04040;">3</div>
<div class="t" style="left:390px;top:146.0px;line-height:14px;font-size:11.5px;color:#0000ff;font-family:'Liberation Mono',monospace;letter-spacing:0px">VAR_IN_OUT</div>
<div class="t" style="left:390px;top:162.5px;line-height:14px;font-size:11.5px;color:#000;font-family:'Liberation Mono',monospace;letter-spacing:0px">&nbsp;&nbsp;&nbsp;&nbsp;stOem</div>
<div class="t" style="left:526px;top:162.5px;line-height:14px;font-size:11.5px;color:#000;font-family:'Liberation Mono',monospace;letter-spacing:0px">: stOemType;</div>
<div class="t" style="left:390px;top:179.0px;line-height:14px;font-size:11.5px;color:#0000ff;font-family:'Liberation Mono',monospace;letter-spacing:0px">END_VAR</div>
<div style="left:1155px;top:298px;width:55px;height:18px;background:#f0f0f0;border:1px solid #c8c8c8;box-sizing:border-box"></div>
<div class="t" style="left:1162px;top:299.0px;line-height:16px;font-size:11px;color:#000;">100 %</div>
<div style="left:1201px;top:298px;width:20px;height:18px;background:#f0f0f0;border:1px solid #c8c8c8;box-sizing:border-box"></div>
<svg style="left:1203px;top:300px" width="16" height="15" viewBox="0 0 16 15"><path d="M1.5 7.5h5v6h-5z" fill="#ddd" stroke="#222"/><circle cx="9" cy="6" r="4.5" fill="none" stroke="#111" stroke-width="1.5"/><circle cx="9" cy="6" r="2" fill="#4ac0d0"/><path d="M12 9l3.5 4" stroke="#111" stroke-width="2"/></svg>
<div style="left:318px;top:320px;width:906px;height:1px;background:#b4b4b4"></div>
<div style="left:318px;top:321px;width:906px;height:5px;background:#fff"></div>
<div style="left:318px;top:326px;width:906px;height:1px;background:#b4b4b4"></div>
<svg style="left:759px;top:321px" width="10" height="5" viewBox="0 0 10 5"><path d="M0.5 5L5 0.5 9.5 5z" fill="#777"/></svg>
<svg style="left:774px;top:321px" width="10" height="5" viewBox="0 0 10 5"><path d="M0.5 0.5h9L5 5z" fill="#777"/></svg>
<div style="left:318px;top:327px;width:890px;height:626px;background:#eff1f0"></div>
<div style="left:318px;top:953px;width:890px;height:111px;background:#808080"></div>
<div style="left:1208px;top:327px;width:16px;height:737px;background:#f0f0f0;border-left:1px solid #fff;box-sizing:border-box"></div>
<div style="left:1209px;top:343px;width:14px;height:224px;background:#cdcdcd"></div>
<svg style="left:1211px;top:331px" width="10" height="6" viewBox="0 0 10 6"><path d="M1 5l4-4 4 4" stroke="#555" stroke-width="1.5" fill="none"/></svg>
<svg style="left:1211px;top:1052px" width="10" height="6" viewBox="0 0 10 6"><path d="M1 1l4 4 4-4" stroke="#555" stroke-width="1.5" fill="none"/></svg>
<div style="left:318px;top:1064px;width:906px;height:16px;background:#f0f0f0"></div>
<div style="left:335px;top:1066px;width:248px;height:12px;background:#cdcdcd"></div>
<svg style="left:322px;top:1067px" width="6" height="10" viewBox="0 0 6 10"><path d="M5 1l-4 4 4 4" stroke="#555" stroke-width="1.5" fill="none"/></svg>
<svg style="left:1197px;top:1067px" width="6" height="10" viewBox="0 0 6 10"><path d="M1 1l4 4-4 4" stroke="#555" stroke-width="1.5" fill="none"/></svg>
<div style="left:1146px;top:1046px;width:62px;height:18px;background:#f0f0f0"></div>
<div class="t" style="left:1152px;top:1047.0px;line-height:16px;font-size:11px;color:#000;">100 %</div>
<div style="left:1187px;top:1046px;width:21px;height:18px;background:#f8f8f8;border-left:1px solid #c8c8c8;box-sizing:border-box"></div>
<svg style="left:1190px;top:1048px" width="16" height="15" viewBox="0 0 16 15"><path d="M1.5 7.5h5v6h-5z" fill="#ddd" stroke="#222"/><circle cx="9" cy="6" r="4.5" fill="none" stroke="#111" stroke-width="1.5"/><circle cx="9" cy="6" r="2" fill="#4ac0d0"/><path d="M12 9l3.5 4" stroke="#111" stroke-width="2"/></svg>
<div class="t" style="left:906px;top:345.5px;line-height:44px;font-size:39px;color:#000;font-weight:bold;letter-spacing:-0.6px">%s</div>
<div style="left:369px;top:448px;width:145px;height:30px;border:1px solid #b0b0b0;box-sizing:border-box"></div>
<div class="t" style="left:428px;top:450.5px;line-height:22px;font-size:18px;color:#14407a;letter-spacing:-0.5px">%s</div>
<svg style="left:365px;top:444px" width="8" height="8" viewBox="0 0 8 8"><rect x="0.5" y="0.5" width="7" height="7" fill="#3838ff" stroke="#1c1ce0"/><path d="M2 4h4M4 2v4" stroke="#9a9aff" stroke-width=".8"/></svg>
<svg style="left:365px;top:458px" width="8" height="8" viewBox="0 0 8 8"><rect x="0.5" y="0.5" width="7" height="7" fill="#3838ff" stroke="#1c1ce0"/><path d="M2 4h4M4 2v4" stroke="#9a9aff" stroke-width=".8"/></svg>
<svg style="left:365px;top:473px" width="8" height="8" viewBox="0 0 8 8"><rect x="0.5" y="0.5" width="7" height="7" fill="#3838ff" stroke="#1c1ce0"/><path d="M2 4h4M4 2v4" stroke="#9a9aff" stroke-width=".8"/></svg>
<svg style="left:437px;top:444px" width="8" height="8" viewBox="0 0 8 8"><rect x="0.5" y="0.5" width="7" height="7" fill="#3838ff" stroke="#1c1ce0"/><path d="M2 4h4M4 2v4" stroke="#9a9aff" stroke-width=".8"/></svg>
<svg style="left:437px;top:473px" width="8" height="8" viewBox="0 0 8 8"><rect x="0.5" y="0.5" width="7" height="7" fill="#3838ff" stroke="#1c1ce0"/><path d="M2 4h4M4 2v4" stroke="#9a9aff" stroke-width=".8"/></svg>
<svg style="left:509px;top:444px" width="8" height="8" viewBox="0 0 8 8"><rect x="0.5" y="0.5" width="7" height="7" fill="#3838ff" stroke="#1c1ce0"/><path d="M2 4h4M4 2v4" stroke="#9a9aff" stroke-width=".8"/></svg>
<svg style="left:509px;top:458px" width="8" height="8" viewBox="0 0 8 8"><rect x="0.5" y="0.5" width="7" height="7" fill="#3838ff" stroke="#1c1ce0"/><path d="M2 4h4M4 2v4" stroke="#9a9aff" stroke-width=".8"/></svg>
<svg style="left:509px;top:473px" width="8" height="8" viewBox="0 0 8 8"><rect x="0.5" y="0.5" width="7" height="7" fill="#3838ff" stroke="#1c1ce0"/><path d="M2 4h4M4 2v4" stroke="#9a9aff" stroke-width=".8"/></svg>
<svg style="left:435px;top:456px" width="13" height="13" viewBox="0 0 13 13"><circle cx="6.3" cy="6.8" r="4.6" fill="#111" stroke="#fff" stroke-width=".8"/><path d="M6.3 4v5.6M3.5 6.8h5.6" stroke="#fff" stroke-width="1.3"/></svg>
<div style="left:1229px;top:101px;width:422px;height:23px;background:#bfcddb;border-top:1px solid #a0a8b0;border-bottom:1px solid #8e969e;box-sizing:border-box"></div>
<div class="t" style="left:1234px;top:104.0px;line-height:18px;font-size:11.5px;color:#1e1e1e;letter-spacing:-0.4px">Properties</div>
<svg style="left:1595px;top:109px" width="10" height="6" viewBox="0 0 10 6"><path d="M0 0h9l-4.5 5z" fill="#000"/></svg>
<svg style="left:1616px;top:106px" width="9" height="12" viewBox="0 0 9 12"><path d="M2 1h5v6h1.5v1.5h-7v-1.5h1.5z" fill="#000"/><path d="M4.5 8v4" stroke="#000" stroke-width="1.2"/><path d="M3.5 2v5" stroke="#fff" stroke-width="1"/></svg>
<svg style="left:1634px;top:107px" width="10" height="10" viewBox="0 0 10 10"><path d="M1 1l8 8M9 1l-8 8" stroke="#000" stroke-width="2"/></svg>
<div style="left:1229px;top:123px;width:422px;height:23px;background:linear-gradient(#fafafa,#f0f0f0)"></div>
<svg style="left:1236px;top:128px" width="12" height="12" viewBox="0 0 12 12"><path d="M0.5 1h11l-4.5 5v5l-2-1.5v-3.5z" fill="none" stroke="#333"/></svg>
<div class="t" style="left:1252px;top:127.5px;line-height:16px;font-size:11px;color:#000;">Filter</div>
<svg style="left:1283px;top:133px" width="8" height="5" viewBox="0 0 8 5"><path d="M0 0h7l-3.5 4z" fill="#000"/></svg>
<div style="left:1294px;top:127px;width:1px;height:16px;background:#cfcfcf"></div>
<svg style="left:1301px;top:128px" width="14" height="14" viewBox="0 0 14 14"><path d="M1 3l4 3-4 3z" fill="#1a2aa0"/><path d="M9 1l3 2.5-3 2.5-2-2.5z M9 8l3 2.5-3 2.5-2-2.5z" fill="#20b0a0" stroke="#222" stroke-width=".6"/></svg>
<div class="t" style="left:1316px;top:127.5px;line-height:16px;font-size:11px;color:#000;">Sort by</div>
<svg style="left:1355px;top:133px" width="8" height="5" viewBox="0 0 8 5"><path d="M0 0h7l-3.5 4z" fill="#000"/></svg>
<svg style="left:1368px;top:126px" width="16" height="18" viewBox="0 0 16 18"><text x="0" y="8" font-size="8" fill="#3030c0" font-family="Liberation Sans">A</text><text x="0" y="17" font-size="8" fill="#c02020" font-family="Liberation Sans" font-weight="bold">Z</text><path d="M10.5 1v14M8 12l2.5 3.5 2.5-3.5" stroke="#333" fill="none" stroke-width="1.2"/></svg>
<div class="t" style="left:1385px;top:127.5px;line-height:16px;font-size:11px;color:#000;">Sort order</div>
<svg style="left:1437px;top:133px" width="8" height="5" viewBox="0 0 8 5"><path d="M0 0h7l-3.5 4z" fill="#000"/></svg>
<svg style="left:1451px;top:127px" width="13" height="14" viewBox="0 0 13 14"><rect x="0.5" y="0.5" width="12" height="13" fill="#fff" stroke="#1a4a7a"/><path d="M2.5 7l3 3 5-7" stroke="#10a010" stroke-width="1.5" fill="none"/></svg>
<div class="t" style="left:1467px;top:127.5px;line-height:16px;font-size:11px;color:#000;">Advanced</div>
<div style="left:1229px;top:146px;width:422px;height:851px;background:#fff;border-top:2px solid #7a7a7a;border-left:2px solid #8a8a8a;border-right:1px solid #9a9a9a;border-bottom:1px solid #8a8a8a;box-sizing:border-box"></div>
<div class="t" style="left:1236px;top:150.8px;line-height:18px;font-size:11.5px;color:#000;letter-spacing:0px">Property</div>
<div class="t" style="left:1465px;top:150.8px;line-height:18px;font-size:11.5px;color:#000;letter-spacing:0px">Value</div>
<div style="left:1459px;top:149px;width:1px;height:22px;background:#e6e6e6"></div>
<div style="left:1231px;top:189px;width:420px;height:1px;background:#e8e8e8"></div>
<div style="left:1459px;top:171px;width:1px;height:19px;background:#e8e8e8"></div>
<div class="t" style="left:1253.0px;top:172.0px;line-height:16px;font-size:11px;color:#000;letter-spacing:-0.25px">Element name</div>
<div class="t" style="left:1463px;top:172.0px;line-height:16px;font-size:11px;color:#000;letter-spacing:-0.25px">GenElemInst_26</div>
<div style="left:1231px;top:207px;width:420px;height:1px;background:#e8e8e8"></div>
<div style="left:1459px;top:190px;width:1px;height:18px;background:#e8e8e8"></div>
<div class="t" style="left:1253.0px;top:190.0px;line-height:16px;font-size:11px;color:#000;letter-spacing:-0.25px">Type of element</div>
<div class="t" style="left:1463px;top:190.0px;line-height:16px;font-size:11px;color:#000;letter-spacing:-0.25px">Frame -> JCmpVisu.TextElement</div>
<div style="left:1231px;top:225px;width:420px;height:1px;background:#e8e8e8"></div>
<div style="left:1459px;top:208px;width:1px;height:18px;background:#e8e8e8"></div>
<div class="t" style="left:1253.0px;top:208.0px;line-height:16px;font-size:11px;color:#000;letter-spacing:-0.25px">Clipping</div>
<div style="left:1549px;top:210px;width:13px;height:13px;background:#fff;border:1px solid #333;box-sizing:border-box"></div>
<div style="left:1231px;top:244px;width:420px;height:1px;background:#e8e8e8"></div>
<div style="left:1459px;top:226px;width:1px;height:19px;background:#e8e8e8"></div>
<div class="t" style="left:1253.0px;top:227.0px;line-height:16px;font-size:11px;color:#000;letter-spacing:-0.25px">Show frame</div>
<div class="t" style="left:1463px;top:227.0px;line-height:16px;font-size:11px;color:#000;letter-spacing:-0.25px">No frame</div>
<div style="left:1231px;top:262px;width:420px;height:1px;background:#e8e8e8"></div>
<div style="left:1459px;top:245px;width:1px;height:18px;background:#e8e8e8"></div>
<div class="t" style="left:1253.0px;top:245.0px;line-height:16px;font-size:11px;color:#000;letter-spacing:-0.25px">Scaling type</div>
<div class="t" style="left:1463px;top:245.0px;line-height:16px;font-size:11px;color:#000;letter-spacing:-0.25px">Anisotropic</div>
<div style="left:1231px;top:280px;width:420px;height:1px;background:#e8e8e8"></div>
<div style="left:1459px;top:263px;width:1px;height:18px;background:#e8e8e8"></div>
<div class="t" style="left:1253.0px;top:263.0px;line-height:16px;font-size:11px;color:#000;letter-spacing:-0.25px">Deactivate the background drawing</div>
<div style="left:1549px;top:265px;width:13px;height:13px;background:#fff;border:1px solid #333;box-sizing:border-box"></div>
<div style="left:1231px;top:299px;width:420px;height:1px;background:#e8e8e8"></div>
<div style="left:1459px;top:281px;width:1px;height:19px;background:#e8e8e8"></div>
<div class="t" style="left:1253.0px;top:282.0px;line-height:16px;font-size:11px;color:#000;letter-spacing:-0.25px">Swiping behavior</div>
<div class="t" style="left:1463px;top:282.0px;line-height:16px;font-size:11px;color:#000;letter-spacing:-0.25px">Not swipable</div>
<div style="left:1231px;top:317px;width:420px;height:1px;background:#e8e8e8"></div>
<div style="left:1459px;top:300px;width:1px;height:18px;background:#e8e8e8"></div>
<svg style="left:1236px;top:302px" width="9" height="9" viewBox="0 0 9 9"><defs><linearGradient id="eg" x1="0" y1="0" x2="0" y2="1"><stop offset="0" stop-color="#fff"/><stop offset="1" stop-color="#d8d8d8"/></linearGradient></defs><rect x="0.5" y="0.5" width="8" height="8" fill="url(#eg)" stroke="#a8cccc"/><path d="M2 4.5h5" stroke="#000" stroke-width="1.3"/></svg>
<div class="t" style="left:1253.0px;top:300.0px;line-height:16px;font-size:11px;color:#000;letter-spacing:-0.25px">References</div>
<div style="left:1269px;top:318px;width:382px;height:18px;background:#dedede"></div>
<div style="left:1231px;top:335px;width:38px;height:1px;background:#ececec"></div>
<svg style="left:1255px;top:320px" width="9" height="9" viewBox="0 0 9 9"><defs><linearGradient id="eg" x1="0" y1="0" x2="0" y2="1"><stop offset="0" stop-color="#fff"/><stop offset="1" stop-color="#d8d8d8"/></linearGradient></defs><rect x="0.5" y="0.5" width="8" height="8" fill="url(#eg)" stroke="#a8cccc"/><path d="M2 4.5h5" stroke="#000" stroke-width="1.3"/></svg>
<div class="t" style="left:1270px;top:318.0px;line-height:16px;font-size:11px;color:#000;letter-spacing:-0.2px">JCmpVisu.TextElement</div>
<div class="t" style="left:1466px;top:318.0px;line-height:16px;font-size:11px;color:#000;">0</div>
<div style="left:1231px;top:353px;width:420px;height:1px;background:#e8e8e8"></div>
<div style="left:1459px;top:336px;width:1px;height:18px;background:#e8e8e8"></div>
<div class="t" style="left:1292.0px;top:336.0px;line-height:16px;font-size:11px;color:#000;letter-spacing:-0.25px">wsTextInput</div>
<div class="t" style="left:1463px;top:336.0px;line-height:16px;font-size:11px;color:#000;letter-spacing:-0.25px">PRG_PLC.wsTextInput</div>
<div style="left:1231px;top:372px;width:420px;height:1px;background:#e8e8e8"></div>
<div style="left:1459px;top:354px;width:1px;height:19px;background:#e8e8e8"></div>
<div class="t" style="left:1292.0px;top:355.0px;line-height:16px;font-size:11px;color:#000;letter-spacing:-0.25px">wsTitle</div>
<div class="t" style="left:1463px;top:355.0px;line-height:16px;font-size:11px;color:#000;letter-spacing:-0.25px">PRG_PLC.wsTitel</div>
<div style="left:1250px;top:373px;width:401px;height:18px;background:#dedede"></div>
<div style="left:1231px;top:390px;width:19px;height:1px;background:#ececec"></div>
<svg style="left:1236px;top:375px" width="9" height="9" viewBox="0 0 9 9"><defs><linearGradient id="eg" x1="0" y1="0" x2="0" y2="1"><stop offset="0" stop-color="#fff"/><stop offset="1" stop-color="#d8d8d8"/></linearGradient></defs><rect x="0.5" y="0.5" width="8" height="8" fill="url(#eg)" stroke="#a8cccc"/><path d="M2 4.5h5" stroke="#000" stroke-width="1.3"/><path d="M4.5 2v5" stroke="#000" stroke-width="1.3"/></svg>
<div class="t" style="left:1251px;top:373.0px;line-height:16px;font-size:11px;color:#000;letter-spacing:0.1px">Position</div>
<div style="left:1250px;top:391px;width:401px;height:18px;background:#dedede"></div>
<div style="left:1231px;top:408px;width:19px;height:1px;background:#ececec"></div>
<svg style="left:1236px;top:393px" width="9" height="9" viewBox="0 0 9 9"><defs><linearGradient id="eg" x1="0" y1="0" x2="0" y2="1"><stop offset="0" stop-color="#fff"/><stop offset="1" stop-color="#d8d8d8"/></linearGradient></defs><rect x="0.5" y="0.5" width="8" height="8" fill="url(#eg)" stroke="#a8cccc"/><path d="M2 4.5h5" stroke="#000" stroke-width="1.3"/><path d="M4.5 2v5" stroke="#000" stroke-width="1.3"/></svg>
<div class="t" style="left:1251px;top:391.0px;line-height:16px;font-size:11px;color:#000;letter-spacing:0.1px">Center</div>
<div style="left:1250px;top:409px;width:401px;height:19px;background:#dedede"></div>
<div style="left:1231px;top:427px;width:19px;height:1px;background:#ececec"></div>
<svg style="left:1236px;top:412px" width="9" height="9" viewBox="0 0 9 9"><defs><linearGradient id="eg" x1="0" y1="0" x2="0" y2="1"><stop offset="0" stop-color="#fff"/><stop offset="1" stop-color="#d8d8d8"/></linearGradient></defs><rect x="0.5" y="0.5" width="8" height="8" fill="url(#eg)" stroke="#a8cccc"/><path d="M2 4.5h5" stroke="#000" stroke-width="1.3"/><path d="M4.5 2v5" stroke="#000" stroke-width="1.3"/></svg>
<div class="t" style="left:1251px;top:410.0px;line-height:16px;font-size:11px;color:#000;letter-spacing:0.1px">Colors</div>
<div style="left:1250px;top:428px;width:401px;height:18px;background:#dedede"></div>
<div style="left:1231px;top:445px;width:19px;height:1px;background:#ececec"></div>
<svg style="left:1236px;top:430px" width="9" height="9" viewBox="0 0 9 9"><defs><linearGradient id="eg" x1="0" y1="0" x2="0" y2="1"><stop offset="0" stop-color="#fff"/><stop offset="1" stop-color="#d8d8d8"/></linearGradient></defs><rect x="0.5" y="0.5" width="8" height="8" fill="url(#eg)" stroke="#a8cccc"/><path d="M2 4.5h5" stroke="#000" stroke-width="1.3"/></svg>
<div class="t" style="left:1251px;top:428.0px;line-height:16px;font-size:11px;color:#000;letter-spacing:0.1px">Appearance</div>
<div style="left:1231px;top:463px;width:420px;height:1px;background:#e8e8e8"></div>
<div style="left:1459px;top:446px;width:1px;height:18px;background:#e8e8e8"></div>
<div class="t" style="left:1272.5px;top:446.0px;line-height:16px;font-size:11px;color:#000;letter-spacing:-0.25px">Line width</div>
<div class="t" style="left:1463px;top:446.0px;line-height:16px;font-size:11px;color:#000;letter-spacing:-0.25px">1</div>
<div style="left:1231px;top:482px;width:420px;height:1px;background:#e8e8e8"></div>
<div style="left:1459px;top:464px;width:1px;height:19px;background:#e8e8e8"></div>
<div class="t" style="left:1272.5px;top:465.0px;line-height:16px;font-size:11px;color:#000;letter-spacing:-0.25px">Line style</div>
<div class="t" style="left:1463px;top:465.0px;line-height:16px;font-size:11px;color:#000;letter-spacing:-0.25px">Solid</div>
<div style="left:1250px;top:483px;width:401px;height:18px;background:#dedede"></div>
<div style="left:1231px;top:500px;width:19px;height:1px;background:#ececec"></div>
<svg style="left:1236px;top:485px" width="9" height="9" viewBox="0 0 9 9"><defs><linearGradient id="eg" x1="0" y1="0" x2="0" y2="1"><stop offset="0" stop-color="#fff"/><stop offset="1" stop-color="#d8d8d8"/></linearGradient></defs><rect x="0.5" y="0.5" width="8" height="8" fill="url(#eg)" stroke="#a8cccc"/><path d="M2 4.5h5" stroke="#000" stroke-width="1.3"/><path d="M4.5 2v5" stroke="#000" stroke-width="1.3"/></svg>
<div class="t" style="left:1251px;top:483.0px;line-height:16px;font-size:11px;color:#000;letter-spacing:0.1px">Texts</div>
<div style="left:1250px;top:501px;width:401px;height:18px;background:#dedede"></div>
<div style="left:1231px;top:518px;width:19px;height:1px;background:#ececec"></div>
<svg style="left:1236px;top:503px" width="9" height="9" viewBox="0 0 9 9"><defs><linearGradient id="eg" x1="0" y1="0" x2="0" y2="1"><stop offset="0" stop-color="#fff"/><stop offset="1" stop-color="#d8d8d8"/></linearGradient></defs><rect x="0.5" y="0.5" width="8" height="8" fill="url(#eg)" stroke="#a8cccc"/><path d="M2 4.5h5" stroke="#000" stroke-width="1.3"/><path d="M4.5 2v5" stroke="#000" stroke-width="1.3"/></svg>
<div class="t" style="left:1251px;top:501.0px;line-height:16px;font-size:11px;color:#000;letter-spacing:0.1px">Text properties</div>
<div style="left:1250px;top:519px;width:401px;height:18px;background:#dedede"></div>
<div style="left:1231px;top:536px;width:19px;height:1px;background:#ececec"></div>
<svg style="left:1236px;top:521px" width="9" height="9" viewBox="0 0 9 9"><defs><linearGradient id="eg" x1="0" y1="0" x2="0" y2="1"><stop offset="0" stop-color="#fff"/><stop offset="1" stop-color="#d8d8d8"/></linearGradient></defs><rect x="0.5" y="0.5" width="8" height="8" fill="url(#eg)" stroke="#a8cccc"/><path d="M2 4.5h5" stroke="#000" stroke-width="1.3"/><path d="M4.5 2v5" stroke="#000" stroke-width="1.3"/></svg>
<div class="t" style="left:1251px;top:519.0px;line-height:16px;font-size:11px;color:#000;letter-spacing:0.1px">Absolute movement</div>
<div style="left:1250px;top:537px;width:401px;height:19px;background:#dedede"></div>
<div style="left:1231px;top:555px;width:19px;height:1px;background:#ececec"></div>
<svg style="left:1236px;top:540px" width="9" height="9" viewBox="0 0 9 9"><defs><linearGradient id="eg" x1="0" y1="0" x2="0" y2="1"><stop offset="0" stop-color="#fff"/><stop offset="1" stop-color="#d8d8d8"/></linearGradient></defs><rect x="0.5" y="0.5" width="8" height="8" fill="url(#eg)" stroke="#a8cccc"/><path d="M2 4.5h5" stroke="#000" stroke-width="1.3"/><path d="M4.5 2v5" stroke="#000" stroke-width="1.3"/></svg>
<div class="t" style="left:1251px;top:538.0px;line-height:16px;font-size:11px;color:#000;letter-spacing:0.1px">Relative movement</div>
<div style="left:1250px;top:556px;width:401px;height:18px;background:#dedede"></div>
<div style="left:1231px;top:573px;width:19px;height:1px;background:#ececec"></div>
<svg style="left:1236px;top:558px" width="9" height="9" viewBox="0 0 9 9"><defs><linearGradient id="eg" x1="0" y1="0" x2="0" y2="1"><stop offset="0" stop-color="#fff"/><stop offset="1" stop-color="#d8d8d8"/></linearGradient></defs><rect x="0.5" y="0.5" width="8" height="8" fill="url(#eg)" stroke="#a8cccc"/><path d="M2 4.5h5" stroke="#000" stroke-width="1.3"/><path d="M4.5 2v5" stroke="#000" stroke-width="1.3"/></svg>
<div class="t" style="left:1251px;top:556.0px;line-height:16px;font-size:11px;color:#000;letter-spacing:0.1px">Text variables</div>
<div style="left:1250px;top:574px;width:401px;height:18px;background:#dedede"></div>
<div style="left:1231px;top:591px;width:19px;height:1px;background:#ececec"></div>
<svg style="left:1236px;top:576px" width="9" height="9" viewBox="0 0 9 9"><defs><linearGradient id="eg" x1="0" y1="0" x2="0" y2="1"><stop offset="0" stop-color="#fff"/><stop offset="1" stop-color="#d8d8d8"/></linearGradient></defs><rect x="0.5" y="0.5" width="8" height="8" fill="url(#eg)" stroke="#a8cccc"/><path d="M2 4.5h5" stroke="#000" stroke-width="1.3"/><path d="M4.5 2v5" stroke="#000" stroke-width="1.3"/></svg>
<div class="t" style="left:1251px;top:574.0px;line-height:16px;font-size:11px;color:#000;letter-spacing:0.1px">Dynamic texts</div>
<div style="left:1250px;top:592px;width:401px;height:19px;background:#dedede"></div>
<div style="left:1231px;top:610px;width:19px;height:1px;background:#ececec"></div>
<svg style="left:1236px;top:595px" width="9" height="9" viewBox="0 0 9 9"><defs><linearGradient id="eg" x1="0" y1="0" x2="0" y2="1"><stop offset="0" stop-color="#fff"/><stop offset="1" stop-color="#d8d8d8"/></linearGradient></defs><rect x="0.5" y="0.5" width="8" height="8" fill="url(#eg)" stroke="#a8cccc"/><path d="M2 4.5h5" stroke="#000" stroke-width="1.3"/><path d="M4.5 2v5" stroke="#000" stroke-width="1.3"/></svg>
<div class="t" style="left:1251px;top:593.0px;line-height:16px;font-size:11px;color:#000;letter-spacing:0.1px">Font variables</div>
<div style="left:1250px;top:611px;width:401px;height:18px;background:#dedede"></div>
<div style="left:1231px;top:628px;width:19px;height:1px;background:#ececec"></div>
<svg style="left:1236px;top:613px" width="9" height="9" viewBox="0 0 9 9"><defs><linearGradient id="eg" x1="0" y1="0" x2="0" y2="1"><stop offset="0" stop-color="#fff"/><stop offset="1" stop-color="#d8d8d8"/></linearGradient></defs><rect x="0.5" y="0.5" width="8" height="8" fill="url(#eg)" stroke="#a8cccc"/><path d="M2 4.5h5" stroke="#000" stroke-width="1.3"/><path d="M4.5 2v5" stroke="#000" stroke-width="1.3"/></svg>
<div class="t" style="left:1251px;top:611.0px;line-height:16px;font-size:11px;color:#000;letter-spacing:0.1px">Color variables</div>
<div style="left:1250px;top:629px;width:401px;height:18px;background:#dedede"></div>
<div style="left:1231px;top:646px;width:19px;height:1px;background:#ececec"></div>
<svg style="left:1236px;top:631px" width="9" height="9" viewBox="0 0 9 9"><defs><linearGradient id="eg" x1="0" y1="0" x2="0" y2="1"><stop offset="0" stop-color="#fff"/><stop offset="1" stop-color="#d8d8d8"/></linearGradient></defs><rect x="0.5" y="0.5" width="8" height="8" fill="url(#eg)" stroke="#a8cccc"/><path d="M2 4.5h5" stroke="#000" stroke-width="1.3"/><path d="M4.5 2v5" stroke="#000" stroke-width="1.3"/></svg>
<div class="t" style="left:1251px;top:629.0px;line-height:16px;font-size:11px;color:#000;letter-spacing:0.1px">Appearancevariables</div>
<div style="left:1250px;top:647px;width:401px;height:19px;background:#dedede"></div>
<div style="left:1231px;top:665px;width:19px;height:1px;background:#ececec"></div>
<svg style="left:1236px;top:650px" width="9" height="9" viewBox="0 0 9 9"><defs><linearGradient id="eg" x1="0" y1="0" x2="0" y2="1"><stop offset="0" stop-color="#fff"/><stop offset="1" stop-color="#d8d8d8"/></linearGradient></defs><rect x="0.5" y="0.5" width="8" height="8" fill="url(#eg)" stroke="#a8cccc"/><path d="M2 4.5h5" stroke="#000" stroke-width="1.3"/><path d="M4.5 2v5" stroke="#000" stroke-width="1.3"/></svg>
<div class="t" style="left:1251px;top:648.0px;line-height:16px;font-size:11px;color:#000;letter-spacing:0.1px">Switch frame variable</div>
<div style="left:1250px;top:666px;width:401px;height:18px;background:#dedede"></div>
<div style="left:1231px;top:683px;width:19px;height:1px;background:#ececec"></div>
<svg style="left:1236px;top:668px" width="9" height="9" viewBox="0 0 9 9"><defs><linearGradient id="eg" x1="0" y1="0" x2="0" y2="1"><stop offset="0" stop-color="#fff"/><stop offset="1" stop-color="#d8d8d8"/></linearGradient></defs><rect x="0.5" y="0.5" width="8" height="8" fill="url(#eg)" stroke="#a8cccc"/><path d="M2 4.5h5" stroke="#000" stroke-width="1.3"/><path d="M4.5 2v5" stroke="#000" stroke-width="1.3"/></svg>
<div class="t" style="left:1251px;top:666.0px;line-height:16px;font-size:11px;color:#000;letter-spacing:0.1px">State variables</div>
<div style="left:1250px;top:684px;width:401px;height:18px;background:#dedede"></div>
<div style="left:1231px;top:701px;width:19px;height:1px;background:#ececec"></div>
<svg style="left:1236px;top:686px" width="9" height="9" viewBox="0 0 9 9"><defs><linearGradient id="eg" x1="0" y1="0" x2="0" y2="1"><stop offset="0" stop-color="#fff"/><stop offset="1" stop-color="#d8d8d8"/></linearGradient></defs><rect x="0.5" y="0.5" width="8" height="8" fill="url(#eg)" stroke="#a8cccc"/><path d="M2 4.5h5" stroke="#000" stroke-width="1.3"/></svg>
<div class="t" style="left:1251px;top:684.0px;line-height:16px;font-size:11px;color:#000;letter-spacing:0.1px">Input configuration</div>
<div style="left:1231px;top:719px;width:420px;height:1px;background:#e8e8e8"></div>
<div style="left:1459px;top:702px;width:1px;height:18px;background:#e8e8e8"></div>
<div class="t" style="left:1272.5px;top:702.0px;line-height:16px;font-size:11px;color:#000;letter-spacing:-0.45px">OnDialogClosed</div>
<div class="t" style="left:1463px;top:702.0px;line-height:16px;font-size:11px;color:#000;letter-spacing:-0.25px">Configure<span style="letter-spacing:1.5px">...</span></div>
<div style="left:1231px;top:738px;width:420px;height:1px;background:#e8e8e8"></div>
<div style="left:1459px;top:720px;width:1px;height:19px;background:#e8e8e8"></div>
<div class="t" style="left:1272.5px;top:721.0px;line-height:16px;font-size:11px;color:#000;letter-spacing:-0.45px">OnMouseClick</div>
<div class="t" style="left:1463px;top:721.0px;line-height:16px;font-size:11px;color:#000;letter-spacing:-0.25px">Configure<span style="letter-spacing:1.5px">...</span></div>
<div style="left:1231px;top:756px;width:420px;height:1px;background:#e8e8e8"></div>
<div style="left:1459px;top:739px;width:1px;height:18px;background:#e8e8e8"></div>
<div class="t" style="left:1272.5px;top:739.0px;line-height:16px;font-size:11px;color:#000;letter-spacing:-0.45px">OnMouseDown</div>
<div class="t" style="left:1463px;top:739.0px;line-height:16px;font-size:11px;color:#000;letter-spacing:-0.25px">Configure<span style="letter-spacing:1.5px">...</span></div>
<div style="left:1231px;top:774px;width:420px;height:1px;background:#e8e8e8"></div>
<div style="left:1459px;top:757px;width:1px;height:18px;background:#e8e8e8"></div>
<div class="t" style="left:1272.5px;top:757.0px;line-height:16px;font-size:11px;color:#000;letter-spacing:-0.45px">OnMouseEnter</div>
<div class="t" style="left:1463px;top:757.0px;line-height:16px;font-size:11px;color:#000;letter-spacing:-0.25px">Configure<span style="letter-spacing:1.5px">...</span></div>
<div style="left:1231px;top:793px;width:420px;height:1px;background:#e8e8e8"></div>
<div style="left:1459px;top:775px;width:1px;height:19px;background:#e8e8e8"></div>
<div class="t" style="left:1272.5px;top:776.0px;line-height:16px;font-size:11px;color:#000;letter-spacing:-0.45px">OnMouseLeave</div>
<div class="t" style="left:1463px;top:776.0px;line-height:16px;font-size:11px;color:#000;letter-spacing:-0.25px">Configure<span style="letter-spacing:1.5px">...</span></div>
<div style="left:1231px;top:811px;width:420px;height:1px;background:#e8e8e8"></div>
<div style="left:1459px;top:794px;width:1px;height:18px;background:#e8e8e8"></div>
<div class="t" style="left:1272.5px;top:794.0px;line-height:16px;font-size:11px;color:#000;letter-spacing:-0.45px">OnMouseMove</div>
<div class="t" style="left:1463px;top:794.0px;line-height:16px;font-size:11px;color:#000;letter-spacing:-0.25px">Configure<span style="letter-spacing:1.5px">...</span></div>
<div style="left:1231px;top:829px;width:420px;height:1px;background:#e8e8e8"></div>
<div style="left:1459px;top:812px;width:1px;height:18px;background:#e8e8e8"></div>
<div class="t" style="left:1272.5px;top:812.0px;line-height:16px;font-size:11px;color:#000;letter-spacing:-0.45px">OnMouseUp</div>
<div class="t" style="left:1463px;top:812.0px;line-height:16px;font-size:11px;color:#000;letter-spacing:-0.25px">Configure<span style="letter-spacing:1.5px">...</span></div>
<div style="left:1231px;top:848px;width:420px;height:1px;background:#e8e8e8"></div>
<div style="left:1459px;top:830px;width:1px;height:19px;background:#e8e8e8"></div>
<div class="t" style="left:1272.5px;top:831.0px;line-height:16px;font-size:11px;color:#000;letter-spacing:-0.45px">OnValueChanged</div>
<div class="t" style="left:1463px;top:831.0px;line-height:16px;font-size:11px;color:#000;letter-spacing:-0.25px">Configure<span style="letter-spacing:1.5px">...</span></div>
<div style="left:1269px;top:849px;width:382px;height:18px;background:#dedede"></div>
<div style="left:1231px;top:866px;width:38px;height:1px;background:#ececec"></div>
<svg style="left:1255px;top:851px" width="9" height="9" viewBox="0 0 9 9"><defs><linearGradient id="eg" x1="0" y1="0" x2="0" y2="1"><stop offset="0" stop-color="#fff"/><stop offset="1" stop-color="#d8d8d8"/></linearGradient></defs><rect x="0.5" y="0.5" width="8" height="8" fill="url(#eg)" stroke="#a8cccc"/><path d="M2 4.5h5" stroke="#000" stroke-width="1.3"/><path d="M4.5 2v5" stroke="#000" stroke-width="1.3"/></svg>
<div class="t" style="left:1270px;top:849.0px;line-height:16px;font-size:11px;color:#000;letter-spacing:0.1px">Toggle</div>
<div style="left:1269px;top:867px;width:382px;height:18px;background:#dedede"></div>
<div style="left:1231px;top:884px;width:38px;height:1px;background:#ececec"></div>
<svg style="left:1255px;top:869px" width="9" height="9" viewBox="0 0 9 9"><defs><linearGradient id="eg" x1="0" y1="0" x2="0" y2="1"><stop offset="0" stop-color="#fff"/><stop offset="1" stop-color="#d8d8d8"/></linearGradient></defs><rect x="0.5" y="0.5" width="8" height="8" fill="url(#eg)" stroke="#a8cccc"/><path d="M2 4.5h5" stroke="#000" stroke-width="1.3"/><path d="M4.5 2v5" stroke="#000" stroke-width="1.3"/></svg>
<div class="t" style="left:1270px;top:867.0px;line-height:16px;font-size:11px;color:#000;letter-spacing:0.1px">Tap</div>
<div style="left:1269px;top:885px;width:382px;height:18px;background:#dedede"></div>
<div style="left:1231px;top:902px;width:38px;height:1px;background:#ececec"></div>
<svg style="left:1255px;top:887px" width="9" height="9" viewBox="0 0 9 9"><defs><linearGradient id="eg" x1="0" y1="0" x2="0" y2="1"><stop offset="0" stop-color="#fff"/><stop offset="1" stop-color="#d8d8d8"/></linearGradient></defs><rect x="0.5" y="0.5" width="8" height="8" fill="url(#eg)" stroke="#a8cccc"/><path d="M2 4.5h5" stroke="#000" stroke-width="1.3"/><path d="M4.5 2v5" stroke="#000" stroke-width="1.3"/></svg>
<div class="t" style="left:1270px;top:885.0px;line-height:16px;font-size:11px;color:#000;letter-spacing:0.1px">Hotkey</div>
<div style="left:1525px;top:300px;width:62px;height:17px;background:#f0f0f0;border:1px solid #adadad;border-top-color:#fff;border-left-color:#fff;box-sizing:border-box"></div>
<div class="t" style="left:1530px;top:299.0px;line-height:16px;font-size:11px;color:#000;letter-spacing:-0.1px">Configure...</div>
<div style="left:1238px;top:313px;width:412px;height:63px;border:2px solid #f00000;box-sizing:border-box"></div>
<div style="left:1229px;top:1003px;width:422px;height:55px;background:#f0f0f0;border:1px solid #dcdcdc;box-sizing:border-box"></div>
<div class="t" style="left:1234px;top:1003.0px;line-height:16px;font-size:11px;color:#000;">Variables describing the online state of this element like the visibility</div>
<div style="left:1229px;top:1059px;width:422px;height:1px;background:#d8d8d8"></div>
<div style="left:2px;top:1041px;width:311px;height:17px;background:#f0f0f0;border:1px solid #a0a0a0;border-top:none;box-sizing:border-box"></div>
<div style="left:18px;top:1042px;width:267px;height:14px;background:#cdcdcd"></div>
<svg style="left:6px;top:1044px" width="6" height="10" viewBox="0 0 6 10"><path d="M5 1l-4 4 4 4" stroke="#444" stroke-width="1.5" fill="none"/></svg>
<svg style="left:301px;top:1044px" width="6" height="10" viewBox="0 0 6 10"><path d="M1 1l4 4-4 4" stroke="#444" stroke-width="1.5" fill="none"/></svg>
<div style="left:1px;top:1058px;width:312px;height:1px;background:#a8a8a8"></div>
<div style="left:2px;top:1059px;width:63px;height:22px;background:#fafafa;border:1px solid #c8c8c8;border-top:none;border-radius:0 0 3px 3px;box-sizing:border-box"></div>
<svg style="left:4px;top:1063px" width="16" height="15" viewBox="0 0 16 15"><ellipse cx="8" cy="4" rx="6" ry="3" fill="#aaa" stroke="#555"/><path d="M2 4v4c0 2 12 2 12 0v-4" fill="#ccc" stroke="#555"/><path d="M8 9v3M1 13h14" stroke="#333" stroke-width="1.5"/><circle cx="8" cy="12" r="2" fill="#f0c020"/></svg>
<div class="t" style="left:22px;top:1062.0px;line-height:16px;font-size:11px;color:#000;letter-spacing:-0.2px">Devices</div>
<svg style="left:68px;top:1062px" width="14" height="16" viewBox="0 0 14 16"><path d="M1.5 3.5h8l3 3v8h-11z" fill="#fff" stroke="#1a50a0"/><path d="M3.5 1.5h7l3 3" fill="none" stroke="#1a50a0"/><path d="M3 7h7M3 9h7M3 11h7" stroke="#7aa0d8"/></svg>
<div class="t" style="left:85px;top:1062.0px;line-height:16px;font-size:11px;color:#555;letter-spacing:-0.2px">POUs</div>
<div style="left:3px;top:1083px;width:299px;height:21px;background:#f0f0f0;border:1px solid #bdbdbd;border-bottom:none;border-radius:3px 3px 0 0;box-sizing:border-box"></div>
<svg style="left:7px;top:1086px" width="12" height="14" viewBox="0 0 12 14"><rect x="0.5" y="0.5" width="11" height="13" fill="#fff" stroke="#222"/><path d="M2.5 3.5h7M2.5 6h7M2.5 8.5h7M2.5 11h7" stroke="#444"/></svg>
<div class="t" style="left:28px;top:1085.0px;line-height:16px;font-size:11px;color:#555;letter-spacing:0.03px">Messages - Total 0 error(s), 0 warning(s), 8 message(s)</div>
<div style="left:1230px;top:1060px;width:421px;height:21px;background:#fafafa"></div>
<svg style="left:1233px;top:1062px" width="15" height="15" viewBox="0 0 15 15"><path d="M4.5 1.5h7l2 2v11h-9z" fill="#fff" stroke="#333"/><rect x="5" y="2" width="4" height="4" fill="#e01010"/><rect x="5" y="5" width="4" height="4" fill="#f0e020"/><rect x="1" y="8" width="4" height="4" fill="#f0e020" stroke="#20a020"/><rect x="5" y="8" width="4" height="4" fill="#d02080"/></svg>
<div class="t" style="left:1251px;top:1062.0px;line-height:16px;font-size:11px;color:#777;letter-spacing:-0.25px">Visualization Toolbox</div>
<div style="left:1352px;top:1059px;width:74px;height:22px;background:#fafafa;border:1px solid #c8c8c8;border-top:none;border-radius:0 0 3px 3px;box-sizing:border-box"></div>
<svg style="left:1355px;top:1062px" width="15" height="15" viewBox="0 0 15 15"><rect x="1.5" y="4.5" width="11" height="10" fill="#fff" stroke="#333"/><path d="M3 7h3M7 7h4M3 9.5h3M7 9.5h4M3 12h3M7 12h4" stroke="#333"/><rect x="1" y="2" width="10" height="3" fill="#888"/><path d="M11 1l3 0 0 3" fill="#1a3a9a" stroke="#1a3a9a"/></svg>
<div class="t" style="left:1373px;top:1062.0px;line-height:16px;font-size:11px;color:#000;letter-spacing:-0.25px">Properties</div>
<div style="left:313px;top:1081px;width:1338px;height:22px;background:#f7f7f7"></div>
<div style="left:1229px;top:1081px;width:422px;height:22px;background:#fbfbfb"></div>
<div style="left:1px;top:1103px;width:1650px;height:21px;background:#f0f0f0;border-top:1px solid #d4d4d4;box-sizing:border-box"></div>
<div style="left:1104px;top:1106px;width:1px;height:16px;background:#dcdcdc"></div>
<div class="t" style="left:1136px;top:1105.5px;line-height:16px;font-size:11px;color:#000;letter-spacing:-0.2px">Last build:</div>
<svg style="left:1188px;top:1107px" width="13" height="13" viewBox="0 0 13 13"><circle cx="6.5" cy="6.5" r="5.5" fill="#e02030"/><path d="M4 4l5 5M9 4l-5 5" stroke="#fff" stroke-width="1.6"/></svg>
<div class="t" style="left:1206px;top:1105.5px;line-height:16px;font-size:11px;color:#000;">0</div>
<svg style="left:1217px;top:1107px" width="13" height="13" viewBox="0 0 13 13"><circle cx="6.5" cy="6.5" r="5.5" fill="#f0d020" stroke="#806000" stroke-width=".8"/><path d="M6.5 3v4.5" stroke="#222" stroke-width="1.6"/><circle cx="6.5" cy="9.5" r=".9" fill="#222"/></svg>
<div class="t" style="left:1234px;top:1105.5px;line-height:16px;font-size:11px;color:#000;">0</div>
<div class="t" style="left:1261px;top:1105.5px;line-height:16px;font-size:11px;color:#000;letter-spacing:-0.2px">Precompile</div>
<svg style="left:1315px;top:1107px" width="16" height="14" viewBox="0 0 16 14"><path d="M1.5 7.5l4 4 9-9" stroke="#20a030" stroke-width="2.5" fill="none"/></svg>
<div style="left:1358px;top:1106px;width:1px;height:16px;background:#dcdcdc"></div>
<div style="left:1381px;top:1106px;width:1px;height:16px;background:#dcdcdc"></div>
<svg style="left:1362px;top:1105px" width="16" height="16" viewBox="0 0 16 16"><circle cx="6" cy="6" r="4" fill="none" stroke="#7a7ac8" stroke-width="2.5"/><circle cx="12" cy="3" r="2.2" fill="#20d020"/><rect x="6.5" y="8.5" width="8" height="7" fill="#cce" stroke="#333"/></svg>
<div class="t" style="left:1442px;top:1106.0px;line-height:16px;font-size:11px;color:#000;letter-spacing:0.1px">Project user: (nobody)</div>
<div style="left:1610px;top:1106px;width:1px;height:16px;background:#dcdcdc"></div>
<div style="left:1634px;top:1106px;width:1px;height:16px;background:#dcdcdc"></div>
<svg style="left:1615px;top:1105px" width="14" height="16" viewBox="0 0 14 16"><path d="M7 1l6 2v5c0 4-3 6-6 7-3-1-6-3-6-7v-5z" fill="#aaa" stroke="#333"/><path d="M7 2v12c2-1 5-3 5-6v-4zM2 8h5" fill="#f0e060"/><path d="M2 4l5-2v6h-5z" fill="#f0e060"/></svg>
<div style="left:1646px;top:1114px;width:2px;height:2px;background:#b0b0b0"></div>
<div style="left:1643px;top:1117px;width:2px;height:2px;background:#b0b0b0"></div>
<div style="left:1646px;top:1117px;width:2px;height:2px;background:#b0b0b0"></div>
<div style="left:1640px;top:1120px;width:2px;height:2px;background:#b0b0b0"></div>
<div style="left:1643px;top:1120px;width:2px;height:2px;background:#b0b0b0"></div>
<div style="left:1646px;top:1120px;width:2px;height:2px;background:#b0b0b0"></div>
<div style="left:0px;top:0px;width:1652px;height:1px;background:#5a6888"></div>
<div style="left:0px;top:0px;width:1px;height:1125px;background:#56648a"></div>
<div style="left:1px;top:101px;width:1px;height:1023px;background:#f8f8f8"></div>
<div style="left:1651px;top:0px;width:1px;height:1125px;background:#5a6888"></div>
<div style="left:0px;top:1124px;width:1652px;height:1px;background:#454c66"></div>
</body></html>
